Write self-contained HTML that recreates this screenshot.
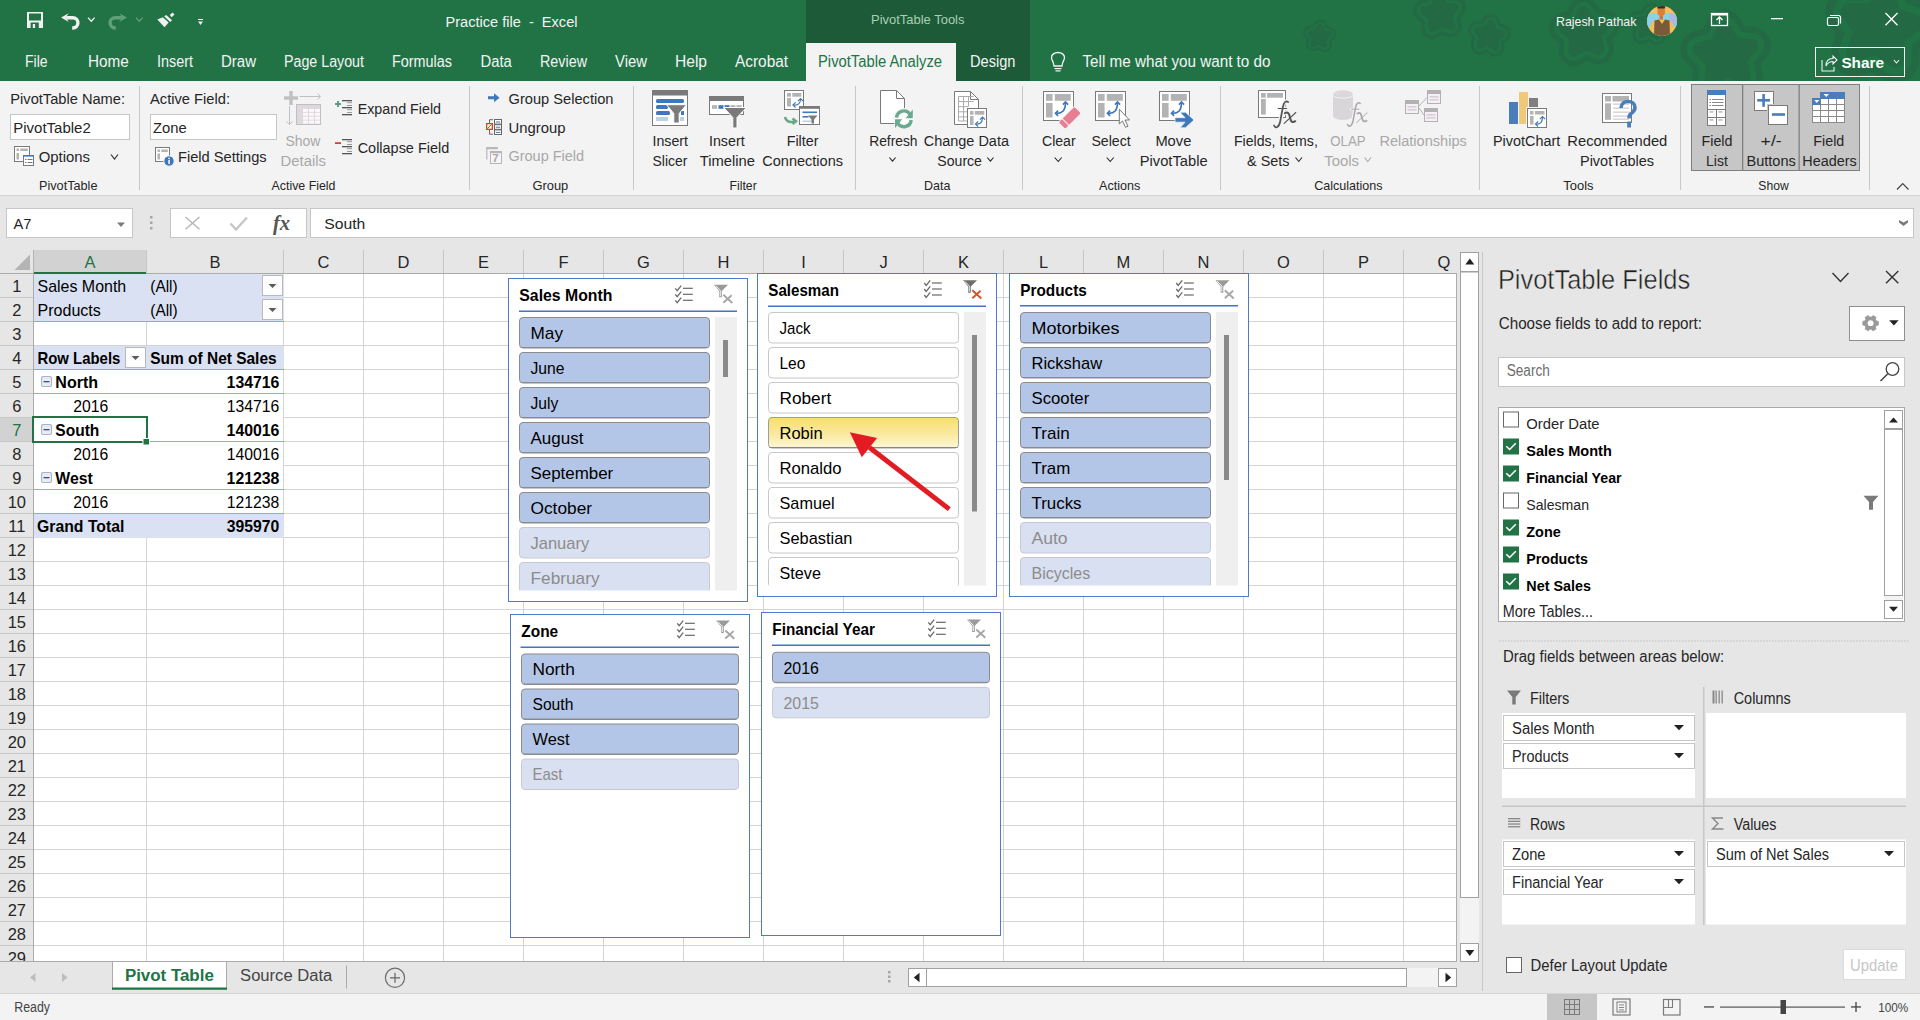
<!DOCTYPE html>
<html><head><meta charset="utf-8"><title>Practice file - Excel</title>
<style>
html,body{margin:0;padding:0;width:1920px;height:1020px;overflow:hidden;background:#e6e6e6;}
svg text{white-space:pre;}
svg{position:absolute;left:0;top:0;display:block;font-family:"Liberation Sans",sans-serif;}
</style></head><body>
<svg width="1920" height="1020" viewBox="0 0 1920 1020" shape-rendering="auto">
<rect x="0" y="0" width="1920" height="81" fill="#217346"/>
<rect x="806" y="0" width="224" height="81" fill="#1d5a37"/>
<rect x="806" y="43" width="150" height="38" fill="#f3f3f3"/>
<rect x="0" y="81" width="1920" height="114" fill="#f3f3f3"/>
<rect x="0" y="195" width="1920" height="1" fill="#d5d5d5"/>
<rect x="0" y="196" width="1920" height="797" fill="#e6e6e6"/>
<rect x="0" y="993" width="1920" height="1" fill="#d5d5d5"/>
<rect x="0" y="994" width="1920" height="26" fill="#f3f3f3"/>
<defs><clipPath id="tclip"><rect x="1030" y="0" width="890" height="81"/></clipPath></defs>
<g clip-path="url(#tclip)">
<path d="M1320.1,26.3 L1322.8,32.4 L1329.3,34.0 L1324.3,38.5 L1324.8,45.2 L1319.0,41.8 L1312.8,44.3 L1314.3,37.8 L1309.9,32.7 L1316.6,32.0Z" fill="#236944" stroke="#236944" stroke-width="14.0" stroke-linejoin="round"/>
<path d="M1320.1,26.3 L1322.8,32.4 L1329.3,34.0 L1324.3,38.5 L1324.8,45.2 L1319.0,41.8 L1312.8,44.3 L1314.3,37.8 L1309.9,32.7 L1316.6,32.0Z" fill="#217346" stroke="#217346" stroke-width="9.4" stroke-linejoin="round"/>
<path d="M1320.1,26.3 L1322.8,32.4 L1329.3,34.0 L1324.3,38.5 L1324.8,45.2 L1319.0,41.8 L1312.8,44.3 L1314.3,37.8 L1309.9,32.7 L1316.6,32.0Z" fill="#236944" stroke="#236944" stroke-width="5.0" stroke-linejoin="round"/>
<path d="M1438.3,-2.1 L1444.2,6.7 L1454.8,7.4 L1448.2,15.8 L1450.8,26.0 L1440.9,22.4 L1431.9,28.0 L1432.3,17.4 L1424.2,10.6 L1434.4,7.7Z" fill="#236944" stroke="#236944" stroke-width="22.235294117647058" stroke-linejoin="round"/>
<path d="M1438.3,-2.1 L1444.2,6.7 L1454.8,7.4 L1448.2,15.8 L1450.8,26.0 L1440.9,22.4 L1431.9,28.0 L1432.3,17.4 L1424.2,10.6 L1434.4,7.7Z" fill="#217346" stroke="#217346" stroke-width="14.929411764705883" stroke-linejoin="round"/>
<path d="M1438.3,-2.1 L1444.2,6.7 L1454.8,7.4 L1448.2,15.8 L1450.8,26.0 L1440.9,22.4 L1431.9,28.0 L1432.3,17.4 L1424.2,10.6 L1434.4,7.7Z" fill="#236944" stroke="#236944" stroke-width="7.941176470588235" stroke-linejoin="round"/>
<path d="M1490.8,22.9 L1493.8,31.1 L1502.0,33.7 L1495.2,39.0 L1495.2,47.7 L1488.0,42.8 L1479.8,45.5 L1482.2,37.2 L1477.1,30.2 L1485.8,29.9Z" fill="#236944" stroke="#236944" stroke-width="18.11764705882353" stroke-linejoin="round"/>
<path d="M1490.8,22.9 L1493.8,31.1 L1502.0,33.7 L1495.2,39.0 L1495.2,47.7 L1488.0,42.8 L1479.8,45.5 L1482.2,37.2 L1477.1,30.2 L1485.8,29.9Z" fill="#217346" stroke="#217346" stroke-width="12.164705882352942" stroke-linejoin="round"/>
<path d="M1490.8,22.9 L1493.8,31.1 L1502.0,33.7 L1495.2,39.0 L1495.2,47.7 L1488.0,42.8 L1479.8,45.5 L1482.2,37.2 L1477.1,30.2 L1485.8,29.9Z" fill="#236944" stroke="#236944" stroke-width="6.470588235294118" stroke-linejoin="round"/>
<path d="M1583.5,11.5 L1591.0,23.5 L1605.0,24.9 L1595.9,35.7 L1598.9,49.5 L1585.8,44.2 L1573.6,51.3 L1574.6,37.2 L1564.0,27.8 L1577.8,24.4Z" fill="#236944" stroke="#236944" stroke-width="29.647058823529413" stroke-linejoin="round"/>
<path d="M1583.5,11.5 L1591.0,23.5 L1605.0,24.9 L1595.9,35.7 L1598.9,49.5 L1585.8,44.2 L1573.6,51.3 L1574.6,37.2 L1564.0,27.8 L1577.8,24.4Z" fill="#217346" stroke="#217346" stroke-width="19.905882352941177" stroke-linejoin="round"/>
<path d="M1583.5,11.5 L1591.0,23.5 L1605.0,24.9 L1595.9,35.7 L1598.9,49.5 L1585.8,44.2 L1573.6,51.3 L1574.6,37.2 L1564.0,27.8 L1577.8,24.4Z" fill="#236944" stroke="#236944" stroke-width="10.588235294117647" stroke-linejoin="round"/>
<path d="M1650.9,11.8 L1654.4,19.7 L1662.8,21.8 L1656.4,27.6 L1657.0,36.2 L1649.5,31.8 L1641.5,35.1 L1643.3,26.7 L1637.8,20.1 L1646.4,19.2Z" fill="#236944" stroke="#236944" stroke-width="18.11764705882353" stroke-linejoin="round"/>
<path d="M1650.9,11.8 L1654.4,19.7 L1662.8,21.8 L1656.4,27.6 L1657.0,36.2 L1649.5,31.8 L1641.5,35.1 L1643.3,26.7 L1637.8,20.1 L1646.4,19.2Z" fill="#217346" stroke="#217346" stroke-width="12.164705882352942" stroke-linejoin="round"/>
<path d="M1650.9,11.8 L1654.4,19.7 L1662.8,21.8 L1656.4,27.6 L1657.0,36.2 L1649.5,31.8 L1641.5,35.1 L1643.3,26.7 L1637.8,20.1 L1646.4,19.2Z" fill="#236944" stroke="#236944" stroke-width="6.470588235294118" stroke-linejoin="round"/>
<path d="M1724.1,28.5 L1733.6,43.8 L1751.6,45.7 L1739.9,59.5 L1743.7,77.1 L1727.0,70.3 L1711.4,79.4 L1712.7,61.4 L1699.2,49.3 L1716.8,45.0Z" fill="#236944" stroke="#236944" stroke-width="37.88235294117648" stroke-linejoin="round"/>
<path d="M1724.1,28.5 L1733.6,43.8 L1751.6,45.7 L1739.9,59.5 L1743.7,77.1 L1727.0,70.3 L1711.4,79.4 L1712.7,61.4 L1699.2,49.3 L1716.8,45.0Z" fill="#217346" stroke="#217346" stroke-width="25.43529411764706" stroke-linejoin="round"/>
<path d="M1724.1,28.5 L1733.6,43.8 L1751.6,45.7 L1739.9,59.5 L1743.7,77.1 L1727.0,70.3 L1711.4,79.4 L1712.7,61.4 L1699.2,49.3 L1716.8,45.0Z" fill="#236944" stroke="#236944" stroke-width="13.529411764705884" stroke-linejoin="round"/>
<path d="M1886.0,-6.3 L1893.0,15.4 L1914.5,23.2 L1896.0,36.5 L1895.3,59.3 L1876.9,45.8 L1855.0,52.2 L1862.1,30.5 L1849.3,11.7 L1872.1,11.7Z" fill="#236944" stroke="#236944" stroke-width="47.76470588235294" stroke-linejoin="round"/>
<path d="M1886.0,-6.3 L1893.0,15.4 L1914.5,23.2 L1896.0,36.5 L1895.3,59.3 L1876.9,45.8 L1855.0,52.2 L1862.1,30.5 L1849.3,11.7 L1872.1,11.7Z" fill="#217346" stroke="#217346" stroke-width="32.07058823529412" stroke-linejoin="round"/>
<path d="M1886.0,-6.3 L1893.0,15.4 L1914.5,23.2 L1896.0,36.5 L1895.3,59.3 L1876.9,45.8 L1855.0,52.2 L1862.1,30.5 L1849.3,11.7 L1872.1,11.7Z" fill="#236944" stroke="#236944" stroke-width="17.058823529411764" stroke-linejoin="round"/>
</g>
<rect x="27" y="12" width="16" height="16" fill="#f1f1f1"/>
<rect x="29" y="13.5" width="12" height="7" fill="#217346"/>
<rect x="30.6" y="22.5" width="8.2" height="5.5" fill="#217346"/>
<rect x="32.8" y="24" width="2.3" height="4" fill="#f1f1f1"/>
<g>
<path d="M61.1,17.4 L68.7,13.2 L66.8,15.9 V19 L68.7,21.9 Z" fill="#f1f1f1"/>
<path d="M66.5,17.7 H72.8 A5.15,5.15 0 0 1 72.8,28 H72.2" fill="none" stroke="#f1f1f1" stroke-width="3.4"/>
</g>
<path d="M88,17.6 L91.3,21.2 L94.6,17.6" fill="none" stroke="#f1f1f1" stroke-width="1.3"/>
<g transform="translate(188,0) scale(-1,1)">
<path d="M61.1,17.4 L68.7,13.2 L66.8,15.9 V19 L68.7,21.9 Z" fill="#5fa07a"/>
<path d="M66.5,17.7 H72.8 A5.15,5.15 0 0 1 72.8,28 H72.2" fill="none" stroke="#5fa07a" stroke-width="3.4"/>
</g>
<path d="M136,17.6 L139.3,21.2 L142.6,17.6" fill="none" stroke="#5fa07a" stroke-width="1.3"/>
<path d="M157.3,19.5 L162.8,17.3 L168.7,22.6 L164.5,27.2 Z" fill="#f1f1f1"/>
<path d="M164.2,16.2 L166.2,14.9 L172,20.2 L170.2,21.9 Z" fill="#f1f1f1"/>
<path d="M169.8,15.1 L172.5,12.5 L174.5,14.4 L171.6,17.2 Z" fill="#f1f1f1"/>
<rect x="198" y="19" width="5" height="1" fill="#f1f1f1"/>
<path d="M198,21.5 H203 L200.5,25 Z" fill="#f1f1f1"/>
<text x="445.50" y="26.70" font-size="15.5" fill="#f4f4f4" textLength="131.97" lengthAdjust="spacingAndGlyphs">Practice file  -  Excel</text>
<text x="871.00" y="24.00" font-size="13.5" fill="#a9d0b6" textLength="93.48" lengthAdjust="spacingAndGlyphs">PivotTable Tools</text>
<text x="1556.00" y="25.70" font-size="13.5" fill="#f4f4f4" textLength="80.33" lengthAdjust="spacingAndGlyphs">Rajesh Pathak</text>
<defs><clipPath id="av"><circle cx="1662" cy="21" r="15"/></clipPath></defs>
<g clip-path="url(#av)">
<rect x="1647" y="6" width="30" height="30" fill="#f3c062"/>
<rect x="1647" y="13" width="30" height="14" fill="#86d3ea"/>
<rect x="1669" y="13" width="8" height="12" fill="#a9b9e0"/>
<path d="M1650,36 L1651,24 C1652,21 1656,20 1662,20 C1668,20 1672,21 1673,24 L1674,36 Z" fill="#f0bf55"/>
<path d="M1654,36 L1654.5,20.5 L1659,19.5 L1662,24 L1665,19.5 L1669.5,20.5 L1670,36 Z" fill="#7b5a3c"/>
<ellipse cx="1661.2" cy="11.5" rx="3.8" ry="5" fill="#d2813f"/>
<rect x="1657.3" y="5.5" width="7.8" height="3" fill="#3a2a20"/>
<rect x="1659.5" y="16" width="3.5" height="3.5" fill="#c87838"/>
</g>
<rect x="1711.5" y="13.5" width="16" height="12" fill="none" stroke="#ffffff" stroke-width="1.3"/>
<rect x="1711.5" y="13.5" width="16" height="2" fill="#ffffff"/>
<path d="M1719.5,24 V17.5 M1716.5,20 L1719.5,17 L1722.5,20" fill="none" stroke="#ffffff" stroke-width="1.3"/>
<rect x="1771" y="18" width="12" height="1.3" fill="#ffffff"/>
<path d="M1830,15.5 H1838.5 C1839.6,15.5 1840.5,16.4 1840.5,17.5 V23.5" fill="none" stroke="#ffffff" stroke-width="1.2"/>
<rect x="1827.5" y="17.5" width="11" height="8" fill="none" stroke="#ffffff" stroke-width="1.2" rx="1.5"/>
<path d="M1885.5,13 L1897.5,25.3 M1897.5,13 L1885.5,25.3" fill="none" stroke="#ffffff" stroke-width="1.3"/>
<text x="25.00" y="66.80" font-size="16" fill="#f4f4f4" textLength="22.52" lengthAdjust="spacingAndGlyphs">File</text>
<text x="88.00" y="66.80" font-size="16" fill="#f4f4f4" textLength="40.71" lengthAdjust="spacingAndGlyphs">Home</text>
<text x="157.00" y="66.80" font-size="16" fill="#f4f4f4" textLength="36.01" lengthAdjust="spacingAndGlyphs">Insert</text>
<text x="221.00" y="66.80" font-size="16" fill="#f4f4f4" textLength="34.98" lengthAdjust="spacingAndGlyphs">Draw</text>
<text x="284.00" y="66.80" font-size="16" fill="#f4f4f4" textLength="80.01" lengthAdjust="spacingAndGlyphs">Page Layout</text>
<text x="392.00" y="66.80" font-size="16" fill="#f4f4f4" textLength="59.97" lengthAdjust="spacingAndGlyphs">Formulas</text>
<text x="480.50" y="66.80" font-size="16" fill="#f4f4f4" textLength="31.21" lengthAdjust="spacingAndGlyphs">Data</text>
<text x="540.00" y="66.80" font-size="16" fill="#f4f4f4" textLength="46.98" lengthAdjust="spacingAndGlyphs">Review</text>
<text x="615.00" y="66.80" font-size="16" fill="#f4f4f4" textLength="31.99" lengthAdjust="spacingAndGlyphs">View</text>
<text x="675.00" y="66.80" font-size="16" fill="#f4f4f4" textLength="32.03" lengthAdjust="spacingAndGlyphs">Help</text>
<text x="735.00" y="66.80" font-size="16" fill="#f4f4f4" textLength="53.02" lengthAdjust="spacingAndGlyphs">Acrobat</text>
<text x="818.00" y="66.80" font-size="16" fill="#217346" textLength="123.99" lengthAdjust="spacingAndGlyphs">PivotTable Analyze</text>
<text x="970.00" y="66.80" font-size="16" fill="#f4f4f4" textLength="45.47" lengthAdjust="spacingAndGlyphs">Design</text>
<path d="M1054,66 C1054,62 1051.5,60.5 1051.5,57.5 C1051.5,54.5 1054.5,52.5 1058,52.5 C1061.5,52.5 1064.5,54.5 1064.5,57.5 C1064.5,60.5 1062,62 1062,66 Z" fill="none" stroke="#f4f4f4" stroke-width="1.3"/>
<rect x="1054.5" y="68" width="7" height="1.2" fill="#f4f4f4"/>
<rect x="1055.5" y="70.3" width="5" height="1.2" fill="#f4f4f4"/>
<text x="1082.50" y="66.80" font-size="16" fill="#f4f4f4" textLength="188.00" lengthAdjust="spacingAndGlyphs">Tell me what you want to do</text>
<rect x="1815.5" y="47.5" width="89" height="29" fill="none" stroke="#f4f4f4" stroke-width="1"/>
<path d="M1822,60 V71 H1834 V67 M1826,66 C1826,61 1829,58.5 1833,58.5 V56 L1837,60 L1833,64 V61.5 C1830,61.5 1827.5,63 1826,66 Z" fill="none" stroke="#f4f4f4" stroke-width="1.1"/>
<text x="1841.40" y="68.30" font-size="15.5" fill="#ffffff" font-weight="700" textLength="42.59" lengthAdjust="spacingAndGlyphs">Share</text>
<path d="M1894,60 L1896.5,63 L1899,60" fill="none" stroke="#f4f4f4" stroke-width="1.1"/>
<rect x="139" y="86" width="1" height="104" fill="#c8c8c8"/>
<rect x="469" y="86" width="1" height="104" fill="#c8c8c8"/>
<rect x="633" y="86" width="1" height="104" fill="#c8c8c8"/>
<rect x="855" y="86" width="1" height="104" fill="#c8c8c8"/>
<rect x="1022" y="86" width="1" height="104" fill="#c8c8c8"/>
<rect x="1220" y="86" width="1" height="104" fill="#c8c8c8"/>
<rect x="1479" y="86" width="1" height="104" fill="#c8c8c8"/>
<rect x="1680" y="86" width="1" height="104" fill="#c8c8c8"/>
<rect x="1869" y="86" width="1" height="104" fill="#c8c8c8"/>
<text x="10.30" y="103.70" font-size="15.5" fill="#262626" textLength="114.73" lengthAdjust="spacingAndGlyphs">PivotTable Name:</text>
<rect x="10" y="114" width="120" height="26" fill="#c6c6c6"/>
<rect x="11" y="115" width="118" height="24" fill="#ffffff"/>
<text x="13.30" y="132.80" font-size="15.5" fill="#262626" textLength="77.50" lengthAdjust="spacingAndGlyphs">PivotTable2</text>
<rect x="14" y="146" width="16" height="16" fill="#7a7a7a"/>
<rect x="15" y="147" width="14" height="14" fill="#ffffff"/>
<rect x="16.5" y="148.5" width="2.5" height="2.5" fill="#b3b3b3"/>
<rect x="20.3" y="148.5" width="7.5" height="2.5" fill="#b3b3b3"/>
<rect x="16.5" y="153" width="2.5" height="6.5" fill="#b3b3b3"/>
<rect x="23" y="155" width="11" height="11" fill="#7a7a7a"/>
<rect x="24" y="156" width="9" height="9" fill="#ffffff"/>
<rect x="23" y="155" width="11" height="1.6" fill="#3f77bc"/>
<rect x="25" y="159" width="1.5" height="1" fill="#777"/>
<rect x="27.5" y="159" width="5" height="1" fill="#777"/>
<rect x="25" y="162" width="1.5" height="1" fill="#777"/>
<rect x="27.5" y="162" width="5" height="1" fill="#777"/>
<text x="38.70" y="162.00" font-size="15.5" fill="#262626" textLength="51.32" lengthAdjust="spacingAndGlyphs">Options</text>
<path d="M111,154.5 L114.5,159.0 L118,154.5" fill="none" stroke="#262626" stroke-width="1.1"/>
<text x="39.00" y="190.00" font-size="13" fill="#262626" textLength="58.49" lengthAdjust="spacingAndGlyphs">PivotTable</text>
<text x="150.00" y="103.70" font-size="15.5" fill="#262626" textLength="80.02" lengthAdjust="spacingAndGlyphs">Active Field:</text>
<rect x="150" y="114" width="127" height="26" fill="#c6c6c6"/>
<rect x="151" y="115" width="125" height="24" fill="#ffffff"/>
<text x="153.00" y="132.80" font-size="15.5" fill="#262626" textLength="33.69" lengthAdjust="spacingAndGlyphs">Zone</text>
<rect x="155" y="147" width="15" height="15" fill="#7a7a7a"/>
<rect x="156" y="148" width="13" height="13" fill="#ffffff"/>
<rect x="157.5" y="149.5" width="2.5" height="2.5" fill="#b3b3b3"/>
<rect x="161.3" y="149.5" width="6.5" height="2.5" fill="#b3b3b3"/>
<rect x="157.5" y="153.5" width="2.5" height="6" fill="#b3b3b3"/>
<circle cx="169" cy="161" r="5.2" fill="#3f77bc" stroke="#f3f3f3" stroke-width="1"/>
<rect x="168.3" y="159.8" width="1.5" height="4.2" fill="#fff"/>
<rect x="168.3" y="157.7" width="1.5" height="1.3" fill="#fff"/>
<text x="178.00" y="162.00" font-size="15.5" fill="#262626" textLength="88.68" lengthAdjust="spacingAndGlyphs">Field Settings</text>
<rect x="284" y="96.3" width="14" height="3.4" fill="#c2bfc2"/>
<rect x="289.3" y="91" width="3.4" height="14" fill="#c2bfc2"/>
<rect x="299.5" y="96" width="21" height="1" fill="#c2bfc2"/>
<path d="M317.5,93.5 L320.5,96.5 L317.5,99.5" fill="none" stroke="#c2bfc2" stroke-width="1"/>
<rect x="289" y="106" width="1" height="18" fill="#c2bfc2"/>
<path d="M286.5,121.5 L289.5,124.5 L292.5,121.5" fill="none" stroke="#c2bfc2" stroke-width="1"/>
<rect x="296" y="104" width="25" height="21" fill="#c2bfc2"/>
<rect x="297" y="105" width="23" height="19" fill="#ddd9dd"/>
<rect x="303" y="108.9" width="5" height="3" fill="#fbf7fb"/>
<rect x="303" y="112.8" width="5" height="3" fill="#fbf7fb"/>
<rect x="303" y="116.7" width="5" height="3" fill="#fbf7fb"/>
<rect x="303" y="120.6" width="5" height="3" fill="#fbf7fb"/>
<rect x="309" y="108.9" width="5" height="3" fill="#fbf7fb"/>
<rect x="309" y="112.8" width="5" height="3" fill="#fbf7fb"/>
<rect x="309" y="116.7" width="5" height="3" fill="#fbf7fb"/>
<rect x="309" y="120.6" width="5" height="3" fill="#fbf7fb"/>
<rect x="315" y="108.9" width="5" height="3" fill="#fbf7fb"/>
<rect x="315" y="112.8" width="5" height="3" fill="#fbf7fb"/>
<rect x="315" y="116.7" width="5" height="3" fill="#fbf7fb"/>
<rect x="315" y="120.6" width="5" height="3" fill="#fbf7fb"/>
<text x="285.40" y="145.60" font-size="15.5" fill="#a8a8a8" textLength="35.05" lengthAdjust="spacingAndGlyphs">Show</text>
<text x="280.60" y="165.80" font-size="15.5" fill="#a8a8a8" textLength="45.33" lengthAdjust="spacingAndGlyphs">Details</text>
<rect x="342" y="100" width="10" height="1.3" fill="#555"/>
<rect x="347" y="102.2" width="5" height="1" fill="#999"/>
<rect x="347" y="105" width="5" height="1" fill="#999"/>
<rect x="342" y="107" width="10" height="1.3" fill="#555"/>
<rect x="347" y="109.2" width="5" height="1" fill="#999"/>
<rect x="347" y="112" width="5" height="1" fill="#999"/>
<rect x="342" y="114" width="10" height="1.3" fill="#555"/>
<rect x="335" y="103.1" width="6" height="1.8" fill="#4e9a76"/>
<rect x="337.1" y="101" width="1.8" height="6" fill="#4e9a76"/>
<text x="357.70" y="113.80" font-size="15.5" fill="#262626" textLength="83.33" lengthAdjust="spacingAndGlyphs">Expand Field</text>
<rect x="342" y="139" width="10" height="1.3" fill="#555"/>
<rect x="347" y="141.2" width="5" height="1" fill="#999"/>
<rect x="347" y="144" width="5" height="1" fill="#999"/>
<rect x="342" y="146" width="10" height="1.3" fill="#555"/>
<rect x="347" y="148.2" width="5" height="1" fill="#999"/>
<rect x="347" y="151" width="5" height="1" fill="#999"/>
<rect x="342" y="153" width="10" height="1.3" fill="#555"/>
<rect x="335" y="142.2" width="6" height="1.8" fill="#d24726"/>
<text x="357.70" y="152.90" font-size="15.5" fill="#262626" textLength="91.52" lengthAdjust="spacingAndGlyphs">Collapse Field</text>
<text x="271.50" y="190.00" font-size="13" fill="#262626" textLength="63.98" lengthAdjust="spacingAndGlyphs">Active Field</text>
<path d="M488,96.3 H494 V93.2 L499.6,97.7 L494,102.2 V99.2 H488 Z" fill="#3f77bc"/>
<text x="508.50" y="104.20" font-size="15.5" fill="#262626" textLength="105.02" lengthAdjust="spacingAndGlyphs">Group Selection</text>
<path d="M493,119.7 H489.5 V134.2 H493" fill="none" stroke="#666" stroke-width="1"/>
<rect x="486" y="123" width="7" height="7" fill="#d24726"/>
<rect x="487.3" y="124.3" width="4.4" height="4.4" fill="#fff"/>
<path d="M487.5,128.5 L491.5,124.5" fill="none" stroke="#d24726" stroke-width="1"/>
<rect x="494" y="119.0" width="8" height="5.6" fill="#666"/>
<rect x="495" y="120.0" width="6" height="3.5999999999999996" fill="#ffffff"/>
<rect x="495.8" y="121.5" width="4.4" height="1" fill="#3f77bc"/>
<rect x="494" y="124.2" width="8" height="5.6" fill="#666"/>
<rect x="495" y="125.2" width="6" height="3.5999999999999996" fill="#ffffff"/>
<rect x="495.8" y="126.7" width="4.4" height="1" fill="#3f77bc"/>
<rect x="494" y="129.4" width="8" height="5.6" fill="#666"/>
<rect x="495" y="130.4" width="6" height="3.5999999999999996" fill="#ffffff"/>
<rect x="495.8" y="131.9" width="4.4" height="1" fill="#3f77bc"/>
<text x="508.50" y="132.50" font-size="15.5" fill="#262626" textLength="56.92" lengthAdjust="spacingAndGlyphs">Ungroup</text>
<path d="M486.8,159.5 V147.8 H497.7" fill="none" stroke="#b8b5b8" stroke-width="1.2"/>
<rect x="486.3" y="147.2" width="11.4" height="2" fill="#b8b5b8"/>
<rect x="490" y="151" width="12" height="13" fill="#b8b5b8"/>
<rect x="491" y="152" width="10" height="11" fill="#f7f3f7"/>
<rect x="490" y="151" width="12" height="2.2" fill="#b8b5b8"/>
<text x="492.2" y="162" font-size="11.5" fill="#a9a9a9" font-weight="700">7</text>
<text x="508.50" y="161.40" font-size="15.5" fill="#a8a8a8" textLength="75.50" lengthAdjust="spacingAndGlyphs">Group Field</text>
<text x="532.40" y="190.00" font-size="13" fill="#262626" textLength="35.89" lengthAdjust="spacingAndGlyphs">Group</text>
<rect x="652" y="90" width="36" height="36" fill="#7a7a7a"/>
<rect x="653" y="91" width="34" height="34" fill="#ffffff"/>
<rect x="652" y="90" width="36" height="5.5" fill="#7a7a7a"/>
<rect x="656" y="99" width="28" height="4" fill="#3f77bc" rx="1.5"/>
<rect x="656" y="105" width="12" height="4" fill="#3f77bc" rx="1.5"/>
<rect x="656" y="111" width="14" height="4" fill="#3f77bc" rx="1.5"/>
<rect x="681" y="111" width="3" height="4" fill="#3f77bc"/>
<rect x="656" y="117" width="12" height="4" fill="#bcd0ea"/>
<rect x="680" y="117" width="4" height="4" fill="#bcd0ea"/>
<path d="M666.5,104.7 H686.5 L679.2,113.5 V123 H673.8 V113.5 Z" fill="#7a7a7a" stroke="#ffffff" stroke-width="1"/>
<text x="652.50" y="145.50" font-size="15.5" fill="#262626" textLength="35.51" lengthAdjust="spacingAndGlyphs">Insert</text>
<text x="652.50" y="165.50" font-size="15.5" fill="#262626" textLength="34.81" lengthAdjust="spacingAndGlyphs">Slicer</text>
<rect x="709" y="96" width="35" height="19" fill="#7a7a7a"/>
<rect x="710" y="97" width="33" height="17" fill="#ffffff"/>
<rect x="709" y="96" width="35" height="5" fill="#7a7a7a"/>
<rect x="712" y="105.2" width="5" height="3.6" fill="#b3b3b3"/>
<rect x="718.5" y="105.2" width="5" height="3.6" fill="#3f77bc"/>
<rect x="724.5" y="105.2" width="5" height="1.8" fill="#3f77bc"/>
<rect x="730.5" y="105.2" width="5" height="1.8" fill="#b3b3b3"/>
<rect x="736.5" y="105.2" width="5" height="1.8" fill="#b3b3b3"/>
<path d="M723.7,107.5 H746.5 L737,117.5 V128 H732.8 V117.5 Z" fill="#7a7a7a" stroke="#ffffff" stroke-width="1"/>
<text x="709.00" y="145.50" font-size="15.5" fill="#262626" textLength="35.61" lengthAdjust="spacingAndGlyphs">Insert</text>
<text x="699.80" y="165.50" font-size="15.5" fill="#262626" textLength="55.23" lengthAdjust="spacingAndGlyphs">Timeline</text>
<rect x="784" y="90" width="20" height="20" fill="#7a7a7a"/>
<rect x="785" y="91" width="18" height="18" fill="#ffffff"/>
<rect x="787" y="93" width="4" height="3.7" fill="#b3b3b3"/>
<rect x="792.3" y="93" width="9" height="3.7" fill="#b3b3b3"/>
<rect x="787" y="98" width="4" height="8.5" fill="#b3b3b3"/>
<path d="M793.5,105 Q800.5,105.8 800.5,99.0" fill="none" stroke="#3f77bc" stroke-width="1.2"/>
<path d="M795.6,102.4 L793,105 L795.6,107.6" fill="none" stroke="#3f77bc" stroke-width="1.2"/>
<path d="M797.9,101.1 L800.5,98.5 L803.1,101.1" fill="none" stroke="#3f77bc" stroke-width="1.2"/>
<rect x="799" y="106" width="21" height="19" fill="#7a7a7a"/>
<rect x="800" y="107" width="19" height="17" fill="#ffffff"/>
<rect x="799" y="106" width="21" height="2.8" fill="#7a7a7a"/>
<rect x="802.5" y="111.5" width="14.5" height="1.6" fill="#3f77bc"/>
<rect x="802.5" y="116" width="6" height="1.6" fill="#3f77bc"/>
<rect x="802.5" y="120.5" width="9" height="1.6" fill="#bcd0ea"/>
<path d="M808,115.5 H817.5 L814,119.5 V123.5 H811.5 V119.5 Z" fill="#7a7a7a"/>
<path d="M785,117 C786,121.5 790,123 795,121.5 M792.5,118.5 L796,121.3 L792.5,124" fill="none" stroke="#6aa88a" stroke-width="2.6"/>
<text x="786.70" y="145.50" font-size="15.5" fill="#262626" textLength="31.83" lengthAdjust="spacingAndGlyphs">Filter</text>
<text x="762.30" y="165.50" font-size="15.5" fill="#262626" textLength="80.69" lengthAdjust="spacingAndGlyphs">Connections</text>
<text x="729.60" y="190.00" font-size="13" fill="#262626" textLength="27.13" lengthAdjust="spacingAndGlyphs">Filter</text>
<path d="M880.5,90.5 H896.5 L904.5,98.5 V123.5 H880.5 Z" fill="#ffffff" stroke="#7a7a7a" stroke-width="1" stroke-linejoin="miter"/>
<path d="M896.5,90.5 V98.5 H904.5" fill="none" stroke="#7a7a7a" stroke-width="1"/>
<circle cx="903.9" cy="118.8" r="10.3" fill="#ffffff" stroke="#f3f3f3" stroke-width="1"/>
<path d="M896.6,117.6 A7.3,7.3 0 0 1 910.2,114.6" fill="none" stroke="#6aaa90" stroke-width="3.4"/>
<path d="M911.2,120 A7.3,7.3 0 0 1 897.6,123" fill="none" stroke="#6aaa90" stroke-width="3.4"/>
<path d="M912.8,109.5 V118.3 H905.6 Z" fill="#6aaa90"/>
<path d="M895,128 V119.3 H902.2 Z" fill="#6aaa90"/>
<text x="869.20" y="145.50" font-size="15.5" fill="#262626" textLength="48.32" lengthAdjust="spacingAndGlyphs">Refresh</text>
<path d="M889.4,157.5 L892.5,161.2 L895.6,157.5" fill="none" stroke="#262626" stroke-width="1.1"/>
<path d="M954.5,91.5 H970.5 L978.5,99.5 V124.5 H954.5 Z" fill="#ffffff" stroke="#7a7a7a" stroke-width="1" stroke-linejoin="miter"/>
<path d="M970.5,91.5 V99.5 H978.5" fill="none" stroke="#7a7a7a" stroke-width="1"/>
<rect x="958" y="96.0" width="1" height="1" fill="#fff"/>
<rect x="958" y="101.1" width="1" height="1" fill="#fff"/>
<rect x="958" y="106.2" width="1" height="1" fill="#fff"/>
<rect x="958" y="111.3" width="1" height="1" fill="#fff"/>
<path d="M958.5,96.5 H973.5 M958.5,101.6 H973.5 M958.5,106.7 H968 M958.5,111.8 H968 M958.5,116.9 H968 M958.5,121 H968 M958.5,96.5 V121 M963.5,96.5 V121 M968.5,96.5 V106.7" fill="none" stroke="#ababab" stroke-width="1"/>
<rect x="967" y="108" width="20" height="20" fill="#7a7a7a"/>
<rect x="968" y="109" width="18" height="18" fill="#ffffff"/>
<rect x="970" y="111" width="3.5" height="3.7" fill="#b3b3b3"/>
<rect x="974.8" y="111" width="9.5" height="3.7" fill="#b3b3b3"/>
<rect x="970" y="116" width="3.5" height="9" fill="#b3b3b3"/>
<path d="M976.0,124 Q982.5,124.8 982.5,117.5" fill="none" stroke="#3f77bc" stroke-width="1.2"/>
<path d="M978.1,121.4 L975.5,124 L978.1,126.6" fill="none" stroke="#3f77bc" stroke-width="1.2"/>
<path d="M979.9,119.6 L982.5,117 L985.1,119.6" fill="none" stroke="#3f77bc" stroke-width="1.2"/>
<text x="923.75" y="145.50" font-size="15.5" fill="#262626" textLength="85.22" lengthAdjust="spacingAndGlyphs">Change Data</text>
<text x="937.30" y="165.50" font-size="15.5" fill="#262626" textLength="44.68" lengthAdjust="spacingAndGlyphs">Source</text>
<path d="M987.3,157.5 L990.4,161.2 L993.5,157.5" fill="none" stroke="#262626" stroke-width="1.1"/>
<text x="924.00" y="190.00" font-size="13" fill="#262626" textLength="26.37" lengthAdjust="spacingAndGlyphs">Data</text>
<rect x="1043" y="91" width="31" height="30" fill="#7a7a7a"/>
<rect x="1044" y="92" width="29" height="28" fill="#ffffff"/>
<rect x="1046" y="94" width="6.6" height="6.8" fill="#b3b3b3"/>
<rect x="1054.8" y="94" width="16" height="6.8" fill="#b3b3b3"/>
<rect x="1046" y="103" width="6.6" height="14.5" fill="#b3b3b3"/>
<path d="M1056.0,113.3 Q1065.5,114.1 1065.5,102.5" fill="none" stroke="#3f77bc" stroke-width="1.7"/>
<path d="M1058.1,110.7 L1055.5,113.3 L1058.1,115.89999999999999" fill="none" stroke="#3f77bc" stroke-width="1.7"/>
<path d="M1062.9,104.6 L1065.5,102 L1068.1,104.6" fill="none" stroke="#3f77bc" stroke-width="1.7"/>
<g transform="translate(1069.8,117.8) rotate(-45)"><rect x="-11.5" y="-5" width="23" height="10" rx="2" fill="#e57f91" stroke="#f3f3f3" stroke-width="1"/><rect x="-6.5" y="-5.5" width="1" height="11" fill="#f3f3f3"/></g>
<text x="1042.00" y="145.50" font-size="15.5" fill="#262626" textLength="33.60" lengthAdjust="spacingAndGlyphs">Clear</text>
<path d="M1054.7,157.5 L1058.2,161.5 L1061.7,157.5" fill="none" stroke="#262626" stroke-width="1.1"/>
<rect x="1095" y="91" width="31" height="30" fill="#7a7a7a"/>
<rect x="1096" y="92" width="29" height="28" fill="#ffffff"/>
<rect x="1098" y="94" width="6.6" height="6.8" fill="#b3b3b3"/>
<rect x="1106.8" y="94" width="16" height="6.8" fill="#b3b3b3"/>
<rect x="1098" y="103" width="6.6" height="14.5" fill="#b3b3b3"/>
<path d="M1108.0,113.3 Q1117.5,114.1 1117.5,102.5" fill="none" stroke="#3f77bc" stroke-width="1.7"/>
<path d="M1110.1,110.7 L1107.5,113.3 L1110.1,115.89999999999999" fill="none" stroke="#3f77bc" stroke-width="1.7"/>
<path d="M1114.9,104.6 L1117.5,102 L1120.1,104.6" fill="none" stroke="#3f77bc" stroke-width="1.7"/>
<path d="M1119.3,109.3 V124 L1122.5,121 L1125.5,127.3 L1128,126.2 L1125,120 H1129.5 Z" fill="#ffffff" stroke="#777" stroke-width="1"/>
<text x="1091.40" y="145.50" font-size="15.5" fill="#262626" textLength="39.29" lengthAdjust="spacingAndGlyphs">Select</text>
<path d="M1106.7,157.5 L1110.2,161.5 L1113.7,157.5" fill="none" stroke="#262626" stroke-width="1.1"/>
<rect x="1159" y="91" width="31" height="30" fill="#7a7a7a"/>
<rect x="1160" y="92" width="29" height="28" fill="#ffffff"/>
<rect x="1162" y="94" width="6.6" height="6.8" fill="#b3b3b3"/>
<rect x="1170.8" y="94" width="16" height="6.8" fill="#b3b3b3"/>
<rect x="1162" y="103" width="6.6" height="14.5" fill="#b3b3b3"/>
<path d="M1172.0,113.3 Q1181.5,114.1 1181.5,102.5" fill="none" stroke="#3f77bc" stroke-width="1.7"/>
<path d="M1174.1,110.7 L1171.5,113.3 L1174.1,115.89999999999999" fill="none" stroke="#3f77bc" stroke-width="1.7"/>
<path d="M1178.9,104.6 L1181.5,102 L1184.1,104.6" fill="none" stroke="#3f77bc" stroke-width="1.7"/>
<path d="M1175,117.7 H1185 L1180,112.2 H1185.5 L1194,120 L1185.5,127.8 H1180 L1185,122.2 H1175 Z" fill="#3f77bc" stroke="#f3f3f3" stroke-width="0.8"/>
<text x="1155.40" y="145.50" font-size="15.5" fill="#262626" textLength="35.91" lengthAdjust="spacingAndGlyphs">Move</text>
<text x="1139.80" y="165.50" font-size="15.5" fill="#262626" textLength="67.78" lengthAdjust="spacingAndGlyphs">PivotTable</text>
<text x="1099.00" y="190.00" font-size="13" fill="#262626" textLength="41.29" lengthAdjust="spacingAndGlyphs">Actions</text>
<rect x="1258" y="90" width="28" height="28" fill="#7a7a7a"/>
<rect x="1259" y="91" width="26" height="26" fill="#ffffff"/>
<rect x="1261" y="93" width="4.8" height="4.7" fill="#b3b3b3"/>
<rect x="1267" y="93" width="16" height="4.7" fill="#b3b3b3"/>
<rect x="1261" y="99" width="4.8" height="15.6" fill="#b3b3b3"/>
<path d="M1274,125.5 C1275.5,128.8 1279,127.6 1280.2,121.5 L1283,106.5 C1284,101.8 1286.2,100.2 1288.2,102.2" fill="none" stroke="#f3f3f3" stroke-width="4.1" stroke-linecap="round"/>
<path d="M1285,113.2 C1288,111.5 1289.2,113.5 1290,117.5 C1290.8,121.5 1292.2,123.3 1295.3,121.2" fill="none" stroke="#f3f3f3" stroke-width="4.4" stroke-linecap="round"/>
<path d="M1295.8,112.5 L1284.2,123.3" fill="none" stroke="#f3f3f3" stroke-width="3.5" stroke-linecap="round"/>
<path d="M1278.3,108.5 H1286.7" fill="none" stroke="#f3f3f3" stroke-width="3.5" stroke-linecap="round"/>
<path d="M1274,125.5 C1275.5,128.8 1279,127.6 1280.2,121.5 L1283,106.5 C1284,101.8 1286.2,100.2 1288.2,102.2" fill="none" stroke="#555" stroke-width="1.7" stroke-linecap="round"/>
<path d="M1285,113.2 C1288,111.5 1289.2,113.5 1290,117.5 C1290.8,121.5 1292.2,123.3 1295.3,121.2" fill="none" stroke="#555" stroke-width="2.0" stroke-linecap="round"/>
<path d="M1295.8,112.5 L1284.2,123.3" fill="none" stroke="#555" stroke-width="1.1" stroke-linecap="round"/>
<path d="M1278.3,108.5 H1286.7" fill="none" stroke="#555" stroke-width="1.1" stroke-linecap="round"/>
<text x="1234.00" y="145.50" font-size="15.5" fill="#262626" textLength="83.81" lengthAdjust="spacingAndGlyphs">Fields, Items,</text>
<text x="1247.00" y="165.50" font-size="15.5" fill="#262626" textLength="42.51" lengthAdjust="spacingAndGlyphs">&amp; Sets</text>
<path d="M1295.5,157.5 L1298.75,161.5 L1302.0,157.5" fill="none" stroke="#262626" stroke-width="1.1"/>
<ellipse cx="1343" cy="94.5" rx="10" ry="4.3" fill="#dcd8dc"/>
<rect x="1333" y="94.5" width="20" height="21.5" fill="#d9d6da"/>
<ellipse cx="1343" cy="116" rx="10" ry="4" fill="#d9d6da"/>
<path d="M1333,95.5 C1336,99 1350,99 1353,95.5" fill="none" stroke="#f3f3f3" stroke-width="1"/>
<g transform="translate(1346.9,102.1) scale(0.9) translate(-1273.4,-100.6)">
<path d="M1274,125.5 C1275.5,128.8 1279,127.6 1280.2,121.5 L1283,106.5 C1284,101.8 1286.2,100.2 1288.2,102.2" fill="none" stroke="#f3f3f3" stroke-width="4.1" stroke-linecap="round"/>
<path d="M1285,113.2 C1288,111.5 1289.2,113.5 1290,117.5 C1290.8,121.5 1292.2,123.3 1295.3,121.2" fill="none" stroke="#f3f3f3" stroke-width="4.4" stroke-linecap="round"/>
<path d="M1295.8,112.5 L1284.2,123.3" fill="none" stroke="#f3f3f3" stroke-width="3.5" stroke-linecap="round"/>
<path d="M1278.3,108.5 H1286.7" fill="none" stroke="#f3f3f3" stroke-width="3.5" stroke-linecap="round"/>
<path d="M1274,125.5 C1275.5,128.8 1279,127.6 1280.2,121.5 L1283,106.5 C1284,101.8 1286.2,100.2 1288.2,102.2" fill="none" stroke="#a8a8a8" stroke-width="1.7" stroke-linecap="round"/>
<path d="M1285,113.2 C1288,111.5 1289.2,113.5 1290,117.5 C1290.8,121.5 1292.2,123.3 1295.3,121.2" fill="none" stroke="#a8a8a8" stroke-width="2.0" stroke-linecap="round"/>
<path d="M1295.8,112.5 L1284.2,123.3" fill="none" stroke="#a8a8a8" stroke-width="1.1" stroke-linecap="round"/>
<path d="M1278.3,108.5 H1286.7" fill="none" stroke="#a8a8a8" stroke-width="1.1" stroke-linecap="round"/>
</g>
<text x="1330.30" y="145.50" font-size="15.5" fill="#a8a8a8" textLength="35.37" lengthAdjust="spacingAndGlyphs">OLAP</text>
<text x="1324.30" y="165.50" font-size="15.5" fill="#a8a8a8" textLength="34.69" lengthAdjust="spacingAndGlyphs">Tools</text>
<path d="M1364.5,157.5 L1367.75,161.5 L1371.0,157.5" fill="none" stroke="#a8a8a8" stroke-width="1.1"/>
<rect x="1405" y="100" width="14" height="14" fill="#b4b1b4"/>
<rect x="1406" y="104" width="12" height="9" fill="#f6f0f6"/>
<rect x="1407.5" y="106.5" width="9" height="0.8" fill="#b4b1b4"/>
<rect x="1407.5" y="109.5" width="9" height="0.8" fill="#b4b1b4"/>
<rect x="1427" y="90" width="14" height="14" fill="#b4b1b4"/>
<rect x="1428" y="94" width="12" height="9" fill="#f6f0f6"/>
<rect x="1429.5" y="96.5" width="9" height="0.8" fill="#b4b1b4"/>
<rect x="1429.5" y="99.5" width="9" height="0.8" fill="#b4b1b4"/>
<rect x="1424" y="108" width="14" height="14" fill="#b4b1b4"/>
<rect x="1425" y="112" width="12" height="9" fill="#f6f0f6"/>
<rect x="1426.5" y="114.5" width="9" height="0.8" fill="#b4b1b4"/>
<rect x="1426.5" y="117.5" width="9" height="0.8" fill="#b4b1b4"/>
<path d="M1419,106 L1427,97.5 M1419,108 L1424,115" fill="none" stroke="#b4b1b4" stroke-width="1"/>
<text x="1379.40" y="145.50" font-size="15.5" fill="#a8a8a8" textLength="87.38" lengthAdjust="spacingAndGlyphs">Relationships</text>
<text x="1314.20" y="190.00" font-size="13" fill="#262626" textLength="68.33" lengthAdjust="spacingAndGlyphs">Calculations</text>
<rect x="1509" y="102" width="9" height="22" fill="#4a7ebb"/>
<rect x="1519" y="92" width="9" height="32" fill="#f0c87a"/>
<rect x="1529" y="98" width="9" height="9" fill="#7f7f7f"/>
<rect x="1526" y="107" width="22" height="22" fill="#f3f3f3"/>
<rect x="1527" y="108" width="20" height="20" fill="#7a7a7a"/>
<rect x="1528" y="109" width="18" height="18" fill="#ffffff"/>
<rect x="1530" y="111" width="3.5" height="3.5" fill="#b3b3b3"/>
<rect x="1535" y="111" width="9.5" height="3.5" fill="#b3b3b3"/>
<rect x="1530" y="116" width="3.5" height="8.5" fill="#b3b3b3"/>
<path d="M1536.0,124 Q1542.5,124.8 1542.5,117.0" fill="none" stroke="#3f77bc" stroke-width="1.2"/>
<path d="M1538.1,121.4 L1535.5,124 L1538.1,126.6" fill="none" stroke="#3f77bc" stroke-width="1.2"/>
<path d="M1539.9,119.1 L1542.5,116.5 L1545.1,119.1" fill="none" stroke="#3f77bc" stroke-width="1.2"/>
<text x="1493.00" y="145.50" font-size="15.5" fill="#262626" textLength="67.18" lengthAdjust="spacingAndGlyphs">PivotChart</text>
<rect x="1602" y="93" width="30" height="30" fill="#7a7a7a"/>
<rect x="1603" y="94" width="28" height="28" fill="#ffffff"/>
<rect x="1605" y="96" width="6" height="5.5" fill="#b3b3b3"/>
<rect x="1612.5" y="96" width="16.5" height="5.5" fill="#b3b3b3"/>
<rect x="1605" y="103.3" width="6" height="16.5" fill="#b3b3b3"/>
<rect x="1613" y="103.5" width="16" height="1.3" fill="#cfcfcf"/>
<rect x="1613" y="107.5" width="16" height="1.3" fill="#cfcfcf"/>
<rect x="1613" y="111.5" width="16" height="1.3" fill="#cfcfcf"/>
<rect x="1613" y="115.5" width="16" height="1.3" fill="#cfcfcf"/>
<rect x="1613" y="118.5" width="16" height="1.3" fill="#cfcfcf"/>
<path d="M1621,108 C1621,103.5 1624.5,101.5 1628,101.5 C1632,101.5 1635,104 1635,107.5 C1635,111 1632.5,112.5 1630.5,114 C1629.3,115 1629,116 1629,118.5" fill="none" stroke="#4a7ebb" stroke-width="3.6" stroke-linejoin="round"/>
<rect x="1627.2" y="121.5" width="3.8" height="6" fill="#4a7ebb"/>
<text x="1567.30" y="145.50" font-size="15.5" fill="#262626" textLength="100.02" lengthAdjust="spacingAndGlyphs">Recommended</text>
<text x="1580.00" y="165.50" font-size="15.5" fill="#262626" textLength="73.98" lengthAdjust="spacingAndGlyphs">PivotTables</text>
<text x="1563.30" y="190.00" font-size="13" fill="#262626" textLength="30.19" lengthAdjust="spacingAndGlyphs">Tools</text>
<rect x="1691" y="84" width="169" height="87" fill="#7f7f7f"/>
<rect x="1692" y="85" width="167" height="85" fill="#c6c6c6"/>
<rect x="1742" y="85" width="1.3" height="85" fill="#7f7f7f"/>
<rect x="1798.5" y="85" width="1.3" height="85" fill="#7f7f7f"/>
<rect x="1707" y="90" width="19" height="36" fill="#7a7a7a"/>
<rect x="1708" y="91" width="17" height="34" fill="#ffffff"/>
<rect x="1707" y="90" width="19" height="5" fill="#4a7ebb"/>
<rect x="1709.5" y="99" width="1.5" height="1" fill="#888"/>
<rect x="1712" y="99" width="11.5" height="1" fill="#888"/>
<rect x="1709.5" y="102" width="1.5" height="1" fill="#888"/>
<rect x="1712" y="102" width="11.5" height="1" fill="#888"/>
<rect x="1709.5" y="105" width="1.5" height="1" fill="#888"/>
<rect x="1712" y="105" width="11.5" height="1" fill="#888"/>
<rect x="1708" y="109" width="17" height="1" fill="#7a7a7a"/>
<rect x="1708" y="117" width="17" height="1" fill="#7a7a7a"/>
<rect x="1716" y="109" width="1" height="16" fill="#7a7a7a"/>
<rect x="1709.5" y="111.5" width="4" height="0.9" fill="#888"/>
<rect x="1718.5" y="111.5" width="4" height="0.9" fill="#888"/>
<rect x="1709.5" y="119.5" width="4" height="0.9" fill="#888"/>
<rect x="1718.5" y="119.5" width="4" height="0.9" fill="#888"/>
<text x="1701.50" y="145.50" font-size="15.5" fill="#262626" textLength="30.97" lengthAdjust="spacingAndGlyphs">Field</text>
<text x="1706.00" y="165.50" font-size="15.5" fill="#262626" textLength="21.82" lengthAdjust="spacingAndGlyphs">List</text>
<rect x="1754" y="91" width="20" height="20" fill="#7a7a7a"/>
<rect x="1755" y="92" width="18" height="18" fill="#ffffff"/>
<rect x="1757.2" y="99" width="12.8" height="2.6" fill="#4a7ebb"/>
<rect x="1762.3" y="94" width="2.6" height="12.8" fill="#4a7ebb"/>
<rect x="1767" y="104" width="22" height="22" fill="#c6c6c6"/>
<rect x="1768" y="105" width="20" height="20" fill="#7a7a7a"/>
<rect x="1769" y="106" width="18" height="18" fill="#ffffff"/>
<rect x="1772" y="113.2" width="13" height="2.6" fill="#4a7ebb"/>
<text x="1760.60" y="145.50" font-size="15.5" fill="#262626" textLength="21.10" lengthAdjust="spacingAndGlyphs">+/-</text>
<text x="1746.50" y="165.50" font-size="15.5" fill="#262626" textLength="49.32" lengthAdjust="spacingAndGlyphs">Buttons</text>
<rect x="1812" y="98" width="33" height="25" fill="#8a8a8a"/>
<rect x="1820" y="92" width="25" height="7" fill="#4a7ebb"/>
<rect x="1812" y="98" width="8.5" height="7" fill="#4a7ebb"/>
<rect x="1813" y="105" width="7" height="5" fill="#ffffff"/>
<rect x="1813" y="111" width="7" height="5" fill="#ffffff"/>
<rect x="1813" y="117" width="7" height="5" fill="#ffffff"/>
<rect x="1821" y="99" width="7" height="5" fill="#ffffff"/>
<rect x="1821" y="105" width="7" height="5" fill="#ffffff"/>
<rect x="1821" y="111" width="7" height="5" fill="#ffffff"/>
<rect x="1821" y="117" width="7" height="5" fill="#ffffff"/>
<rect x="1829" y="99" width="7" height="5" fill="#ffffff"/>
<rect x="1829" y="105" width="7" height="5" fill="#ffffff"/>
<rect x="1829" y="111" width="7" height="5" fill="#ffffff"/>
<rect x="1829" y="117" width="7" height="5" fill="#ffffff"/>
<rect x="1837" y="99" width="7" height="5" fill="#ffffff"/>
<rect x="1837" y="105" width="7" height="5" fill="#ffffff"/>
<rect x="1837" y="111" width="7" height="5" fill="#ffffff"/>
<rect x="1837" y="117" width="7" height="5" fill="#ffffff"/>
<path d="M1823.5,94 H1829 L1826.25,97 Z" fill="#fff"/>
<path d="M1814.3,100 H1819.3 L1816.8,103 Z" fill="#fff"/>
<rect x="1813" y="105" width="7" height="5" fill="#fff"/>
<rect x="1813" y="111" width="7" height="5" fill="#fff"/>
<rect x="1813" y="117" width="7" height="5" fill="#fff"/>
<text x="1813.30" y="145.50" font-size="15.5" fill="#262626" textLength="30.97" lengthAdjust="spacingAndGlyphs">Field</text>
<text x="1802.30" y="165.50" font-size="15.5" fill="#262626" textLength="54.40" lengthAdjust="spacingAndGlyphs">Headers</text>
<text x="1758.30" y="190.00" font-size="13" fill="#262626" textLength="30.36" lengthAdjust="spacingAndGlyphs">Show</text>
<path d="M1897,189.5 L1902.75,183.5 L1908.5,189.5" fill="none" stroke="#444" stroke-width="1.2"/>
<rect x="6" y="208" width="127" height="30" fill="#c6c6c6"/>
<rect x="7" y="209" width="125" height="28" fill="#ffffff"/>
<text x="13.50" y="229.00" font-size="15.5" fill="#262626" textLength="17.97" lengthAdjust="spacingAndGlyphs">A7</text>
<path d="M117,222.5 H125 L121,227 Z" fill="#7a7a7a"/>
<rect x="150" y="216" width="2.5" height="2.5" fill="#a6a6a6"/>
<rect x="150" y="221.5" width="2.5" height="2.5" fill="#a6a6a6"/>
<rect x="150" y="227" width="2.5" height="2.5" fill="#a6a6a6"/>
<rect x="170" y="208" width="137" height="30" fill="#c6c6c6"/>
<rect x="171" y="209" width="135" height="28" fill="#ffffff"/>
<path d="M185.5,217 L199.5,229.3 M199.5,217 L185.5,229.3" fill="none" stroke="#b7b7b7" stroke-width="1.5"/>
<path d="M230.5,223.5 L236,229.5 L247,217.5" fill="none" stroke="#c6c6c6" stroke-width="2.4"/>
<text x="273" y="229.5" font-family="Liberation Serif" font-style="italic" font-weight="700" font-size="20" fill="#555" textLength="17" lengthAdjust="spacingAndGlyphs">fx</text>
<rect x="310" y="208" width="1604" height="30" fill="#c6c6c6"/>
<rect x="311" y="209" width="1602" height="28" fill="#ffffff"/>
<text x="324.20" y="229.00" font-size="15.5" fill="#262626" textLength="41.07" lengthAdjust="spacingAndGlyphs">South</text>
<path d="M1899,220 L1903.5,222.5 L1908,220 V222.5 L1903.5,226 L1899,222.5 Z" fill="#7a7a7a"/>
<rect x="34" y="274" width="1423" height="688" fill="#ffffff"/>
<rect x="146" y="274" width="1" height="688" fill="#d4d4d4"/>
<rect x="283" y="274" width="1" height="688" fill="#d4d4d4"/>
<rect x="363" y="274" width="1" height="688" fill="#d4d4d4"/>
<rect x="443" y="274" width="1" height="688" fill="#d4d4d4"/>
<rect x="523" y="274" width="1" height="688" fill="#d4d4d4"/>
<rect x="603" y="274" width="1" height="688" fill="#d4d4d4"/>
<rect x="683" y="274" width="1" height="688" fill="#d4d4d4"/>
<rect x="763" y="274" width="1" height="688" fill="#d4d4d4"/>
<rect x="843" y="274" width="1" height="688" fill="#d4d4d4"/>
<rect x="923" y="274" width="1" height="688" fill="#d4d4d4"/>
<rect x="1003" y="274" width="1" height="688" fill="#d4d4d4"/>
<rect x="1083" y="274" width="1" height="688" fill="#d4d4d4"/>
<rect x="1163" y="274" width="1" height="688" fill="#d4d4d4"/>
<rect x="1243" y="274" width="1" height="688" fill="#d4d4d4"/>
<rect x="1323" y="274" width="1" height="688" fill="#d4d4d4"/>
<rect x="1403" y="274" width="1" height="688" fill="#d4d4d4"/>
<rect x="34" y="297" width="1423" height="1" fill="#d4d4d4"/>
<rect x="34" y="321" width="1423" height="1" fill="#d4d4d4"/>
<rect x="34" y="345" width="1423" height="1" fill="#d4d4d4"/>
<rect x="34" y="369" width="1423" height="1" fill="#d4d4d4"/>
<rect x="34" y="393" width="1423" height="1" fill="#d4d4d4"/>
<rect x="34" y="417" width="1423" height="1" fill="#d4d4d4"/>
<rect x="34" y="441" width="1423" height="1" fill="#d4d4d4"/>
<rect x="34" y="465" width="1423" height="1" fill="#d4d4d4"/>
<rect x="34" y="489" width="1423" height="1" fill="#d4d4d4"/>
<rect x="34" y="513" width="1423" height="1" fill="#d4d4d4"/>
<rect x="34" y="537" width="1423" height="1" fill="#d4d4d4"/>
<rect x="34" y="561" width="1423" height="1" fill="#d4d4d4"/>
<rect x="34" y="585" width="1423" height="1" fill="#d4d4d4"/>
<rect x="34" y="609" width="1423" height="1" fill="#d4d4d4"/>
<rect x="34" y="633" width="1423" height="1" fill="#d4d4d4"/>
<rect x="34" y="657" width="1423" height="1" fill="#d4d4d4"/>
<rect x="34" y="681" width="1423" height="1" fill="#d4d4d4"/>
<rect x="34" y="705" width="1423" height="1" fill="#d4d4d4"/>
<rect x="34" y="729" width="1423" height="1" fill="#d4d4d4"/>
<rect x="34" y="753" width="1423" height="1" fill="#d4d4d4"/>
<rect x="34" y="777" width="1423" height="1" fill="#d4d4d4"/>
<rect x="34" y="801" width="1423" height="1" fill="#d4d4d4"/>
<rect x="34" y="825" width="1423" height="1" fill="#d4d4d4"/>
<rect x="34" y="849" width="1423" height="1" fill="#d4d4d4"/>
<rect x="34" y="873" width="1423" height="1" fill="#d4d4d4"/>
<rect x="34" y="897" width="1423" height="1" fill="#d4d4d4"/>
<rect x="34" y="921" width="1423" height="1" fill="#d4d4d4"/>
<rect x="34" y="945" width="1423" height="1" fill="#d4d4d4"/>
<rect x="34" y="274" width="250" height="47" fill="#d9e1f2"/>
<rect x="34" y="321" width="250" height="1" fill="#8ea9db"/>
<rect x="34" y="346" width="250" height="23" fill="#d9e1f2"/>
<rect x="34" y="369" width="250" height="1" fill="#8ea9db"/>
<rect x="34" y="370" width="249" height="143" fill="#ffffff"/>
<rect x="34" y="393" width="250" height="1" fill="#8ea9db"/>
<rect x="34" y="441" width="250" height="1" fill="#8ea9db"/>
<rect x="34" y="489" width="250" height="1" fill="#8ea9db"/>
<rect x="34" y="513" width="250" height="1" fill="#8ea9db"/>
<rect x="34" y="514" width="250" height="24" fill="#d9e1f2"/>
<text x="37.50" y="292.00" font-size="17" fill="#000" textLength="88.73" lengthAdjust="spacingAndGlyphs">Sales Month</text>
<text x="150.30" y="292.00" font-size="17" fill="#000" textLength="27.36" lengthAdjust="spacingAndGlyphs">(All)</text>
<text x="37.50" y="316.00" font-size="17" fill="#000" textLength="63.32" lengthAdjust="spacingAndGlyphs">Products</text>
<text x="150.30" y="316.00" font-size="17" fill="#000" textLength="27.36" lengthAdjust="spacingAndGlyphs">(All)</text>
<rect x="262" y="275" width="21" height="21" fill="#b9b9b9"/>
<rect x="263" y="276" width="19" height="19" fill="#fdfdfd"/>
<path d="M268.5,284 H276.5 L272.5,288 Z" fill="#595959"/>
<rect x="262" y="299" width="21" height="21" fill="#b9b9b9"/>
<rect x="263" y="300" width="19" height="19" fill="#fdfdfd"/>
<path d="M268.5,308 H276.5 L272.5,312 Z" fill="#595959"/>
<text x="37.50" y="364.00" font-size="17" fill="#000" font-weight="700" textLength="82.83" lengthAdjust="spacingAndGlyphs">Row Labels</text>
<rect x="125" y="347" width="21" height="21" fill="#b9b9b9"/>
<rect x="126" y="348" width="19" height="19" fill="#fdfdfd"/>
<path d="M131.5,356 H139.5 L135.5,360 Z" fill="#595959"/>
<text x="150.30" y="364.00" font-size="17" fill="#000" font-weight="700" textLength="126.29" lengthAdjust="spacingAndGlyphs">Sum of Net Sales</text>
<rect x="41" y="376" width="11" height="11" fill="#a5b4d2" rx="2"/>
<rect x="42" y="377" width="9" height="9" fill="#ebebeb" rx="1.5"/>
<rect x="43.5" y="381" width="6" height="1.3" fill="#3b4e8c"/>
<text x="55.30" y="388.00" font-size="17" fill="#000" font-weight="700" textLength="42.82" lengthAdjust="spacingAndGlyphs">North</text>
<text x="226.60" y="388.00" font-size="17" fill="#000" font-weight="700" textLength="52.83" lengthAdjust="spacingAndGlyphs">134716</text>
<text x="73.30" y="412.00" font-size="17" fill="#000" textLength="35.00" lengthAdjust="spacingAndGlyphs">2016</text>
<text x="226.70" y="412.00" font-size="17" fill="#000" textLength="52.53" lengthAdjust="spacingAndGlyphs">134716</text>
<rect x="41" y="424" width="11" height="11" fill="#a5b4d2" rx="2"/>
<rect x="42" y="425" width="9" height="9" fill="#ebebeb" rx="1.5"/>
<rect x="43.5" y="429" width="6" height="1.3" fill="#3b4e8c"/>
<text x="55.30" y="436.00" font-size="17" fill="#000" font-weight="700" textLength="44.06" lengthAdjust="spacingAndGlyphs">South</text>
<text x="226.60" y="436.00" font-size="17" fill="#000" font-weight="700" textLength="52.83" lengthAdjust="spacingAndGlyphs">140016</text>
<text x="73.30" y="460.00" font-size="17" fill="#000" textLength="35.00" lengthAdjust="spacingAndGlyphs">2016</text>
<text x="226.70" y="460.00" font-size="17" fill="#000" textLength="52.53" lengthAdjust="spacingAndGlyphs">140016</text>
<rect x="41" y="472" width="11" height="11" fill="#a5b4d2" rx="2"/>
<rect x="42" y="473" width="9" height="9" fill="#ebebeb" rx="1.5"/>
<rect x="43.5" y="477" width="6" height="1.3" fill="#3b4e8c"/>
<text x="55.30" y="484.00" font-size="17" fill="#000" font-weight="700" textLength="37.42" lengthAdjust="spacingAndGlyphs">West</text>
<text x="226.60" y="484.00" font-size="17" fill="#000" font-weight="700" textLength="52.83" lengthAdjust="spacingAndGlyphs">121238</text>
<text x="73.30" y="508.00" font-size="17" fill="#000" textLength="35.00" lengthAdjust="spacingAndGlyphs">2016</text>
<text x="226.70" y="508.00" font-size="17" fill="#000" textLength="52.53" lengthAdjust="spacingAndGlyphs">121238</text>
<text x="37.00" y="532.00" font-size="17" fill="#000" font-weight="700" textLength="87.43" lengthAdjust="spacingAndGlyphs">Grand Total</text>
<text x="226.70" y="532.00" font-size="17" fill="#000" font-weight="700" textLength="52.53" lengthAdjust="spacingAndGlyphs">395970</text>
<rect x="0" y="250" width="1457" height="23" fill="#e6e6e6"/>
<rect x="34" y="250" width="112" height="23" fill="#d2d2d2"/>
<rect x="146" y="250" width="1" height="23" fill="#c6c6c6"/>
<rect x="283" y="250" width="1" height="23" fill="#c6c6c6"/>
<rect x="363" y="250" width="1" height="23" fill="#c6c6c6"/>
<rect x="443" y="250" width="1" height="23" fill="#c6c6c6"/>
<rect x="523" y="250" width="1" height="23" fill="#c6c6c6"/>
<rect x="603" y="250" width="1" height="23" fill="#c6c6c6"/>
<rect x="683" y="250" width="1" height="23" fill="#c6c6c6"/>
<rect x="763" y="250" width="1" height="23" fill="#c6c6c6"/>
<rect x="843" y="250" width="1" height="23" fill="#c6c6c6"/>
<rect x="923" y="250" width="1" height="23" fill="#c6c6c6"/>
<rect x="1003" y="250" width="1" height="23" fill="#c6c6c6"/>
<rect x="1083" y="250" width="1" height="23" fill="#c6c6c6"/>
<rect x="1163" y="250" width="1" height="23" fill="#c6c6c6"/>
<rect x="1243" y="250" width="1" height="23" fill="#c6c6c6"/>
<rect x="1323" y="250" width="1" height="23" fill="#c6c6c6"/>
<rect x="1403" y="250" width="1" height="23" fill="#c6c6c6"/>
<rect x="33" y="250" width="1" height="23" fill="#b4b4b4"/>
<rect x="0" y="273" width="1457" height="1" fill="#ababab"/>
<rect x="34" y="272" width="112" height="2" fill="#217346"/>
<path d="M14.5,270 H30 V254.5 Z" fill="#b4b4b4"/>
<text x="84.47" y="268.20" font-size="16.5" fill="#217346" textLength="11.01" lengthAdjust="spacingAndGlyphs">A</text>
<text x="209.51" y="268.20" font-size="16.5" fill="#262626" textLength="11.01" lengthAdjust="spacingAndGlyphs">B</text>
<text x="317.56" y="268.20" font-size="16.5" fill="#262626" textLength="11.92" lengthAdjust="spacingAndGlyphs">C</text>
<text x="397.56" y="268.20" font-size="16.5" fill="#262626" textLength="11.92" lengthAdjust="spacingAndGlyphs">D</text>
<text x="478.01" y="268.20" font-size="16.5" fill="#262626" textLength="11.01" lengthAdjust="spacingAndGlyphs">E</text>
<text x="558.47" y="268.20" font-size="16.5" fill="#262626" textLength="10.08" lengthAdjust="spacingAndGlyphs">F</text>
<text x="637.07" y="268.20" font-size="16.5" fill="#262626" textLength="12.83" lengthAdjust="spacingAndGlyphs">G</text>
<text x="717.56" y="268.20" font-size="16.5" fill="#262626" textLength="11.92" lengthAdjust="spacingAndGlyphs">H</text>
<text x="801.19" y="268.20" font-size="16.5" fill="#262626" textLength="4.58" lengthAdjust="spacingAndGlyphs">I</text>
<text x="879.38" y="268.20" font-size="16.5" fill="#262626" textLength="8.25" lengthAdjust="spacingAndGlyphs">J</text>
<text x="958.01" y="268.20" font-size="16.5" fill="#262626" textLength="11.01" lengthAdjust="spacingAndGlyphs">K</text>
<text x="1038.92" y="268.20" font-size="16.5" fill="#262626" textLength="9.18" lengthAdjust="spacingAndGlyphs">L</text>
<text x="1116.61" y="268.20" font-size="16.5" fill="#262626" textLength="13.75" lengthAdjust="spacingAndGlyphs">M</text>
<text x="1197.56" y="268.20" font-size="16.5" fill="#262626" textLength="11.92" lengthAdjust="spacingAndGlyphs">N</text>
<text x="1277.07" y="268.20" font-size="16.5" fill="#262626" textLength="12.83" lengthAdjust="spacingAndGlyphs">O</text>
<text x="1358.01" y="268.20" font-size="16.5" fill="#262626" textLength="11.01" lengthAdjust="spacingAndGlyphs">P</text>
<text x="1437.57" y="268.20" font-size="16.5" fill="#262626" textLength="12.83" lengthAdjust="spacingAndGlyphs">Q</text>
<rect x="0" y="274" width="33" height="688" fill="#e6e6e6"/>
<rect x="0" y="418" width="33" height="23" fill="#d2d2d2"/>
<rect x="0" y="297" width="33" height="1" fill="#c6c6c6"/>
<rect x="0" y="321" width="33" height="1" fill="#c6c6c6"/>
<rect x="0" y="345" width="33" height="1" fill="#c6c6c6"/>
<rect x="0" y="369" width="33" height="1" fill="#c6c6c6"/>
<rect x="0" y="393" width="33" height="1" fill="#c6c6c6"/>
<rect x="0" y="417" width="33" height="1" fill="#c6c6c6"/>
<rect x="0" y="441" width="33" height="1" fill="#c6c6c6"/>
<rect x="0" y="465" width="33" height="1" fill="#c6c6c6"/>
<rect x="0" y="489" width="33" height="1" fill="#c6c6c6"/>
<rect x="0" y="513" width="33" height="1" fill="#c6c6c6"/>
<rect x="0" y="537" width="33" height="1" fill="#c6c6c6"/>
<rect x="0" y="561" width="33" height="1" fill="#c6c6c6"/>
<rect x="0" y="585" width="33" height="1" fill="#c6c6c6"/>
<rect x="0" y="609" width="33" height="1" fill="#c6c6c6"/>
<rect x="0" y="633" width="33" height="1" fill="#c6c6c6"/>
<rect x="0" y="657" width="33" height="1" fill="#c6c6c6"/>
<rect x="0" y="681" width="33" height="1" fill="#c6c6c6"/>
<rect x="0" y="705" width="33" height="1" fill="#c6c6c6"/>
<rect x="0" y="729" width="33" height="1" fill="#c6c6c6"/>
<rect x="0" y="753" width="33" height="1" fill="#c6c6c6"/>
<rect x="0" y="777" width="33" height="1" fill="#c6c6c6"/>
<rect x="0" y="801" width="33" height="1" fill="#c6c6c6"/>
<rect x="0" y="825" width="33" height="1" fill="#c6c6c6"/>
<rect x="0" y="849" width="33" height="1" fill="#c6c6c6"/>
<rect x="0" y="873" width="33" height="1" fill="#c6c6c6"/>
<rect x="0" y="897" width="33" height="1" fill="#c6c6c6"/>
<rect x="0" y="921" width="33" height="1" fill="#c6c6c6"/>
<rect x="0" y="945" width="33" height="1" fill="#c6c6c6"/>
<rect x="33" y="274" width="1" height="688" fill="#ababab"/>
<text x="12.22" y="292.00" font-size="16.5" fill="#262626" textLength="9.18" lengthAdjust="spacingAndGlyphs">1</text>
<text x="12.22" y="316.00" font-size="16.5" fill="#262626" textLength="9.18" lengthAdjust="spacingAndGlyphs">2</text>
<text x="12.22" y="340.00" font-size="16.5" fill="#262626" textLength="9.18" lengthAdjust="spacingAndGlyphs">3</text>
<text x="12.22" y="364.00" font-size="16.5" fill="#262626" textLength="9.18" lengthAdjust="spacingAndGlyphs">4</text>
<text x="12.22" y="388.00" font-size="16.5" fill="#262626" textLength="9.18" lengthAdjust="spacingAndGlyphs">5</text>
<text x="12.22" y="412.00" font-size="16.5" fill="#262626" textLength="9.18" lengthAdjust="spacingAndGlyphs">6</text>
<text x="12.22" y="436.00" font-size="16.5" fill="#217346" textLength="9.18" lengthAdjust="spacingAndGlyphs">7</text>
<text x="12.22" y="460.00" font-size="16.5" fill="#262626" textLength="9.18" lengthAdjust="spacingAndGlyphs">8</text>
<text x="12.22" y="484.00" font-size="16.5" fill="#262626" textLength="9.18" lengthAdjust="spacingAndGlyphs">9</text>
<text x="7.64" y="508.00" font-size="16.5" fill="#262626" textLength="18.35" lengthAdjust="spacingAndGlyphs">10</text>
<text x="8.22" y="532.00" font-size="16.5" fill="#262626" textLength="17.13" lengthAdjust="spacingAndGlyphs">11</text>
<text x="7.64" y="556.00" font-size="16.5" fill="#262626" textLength="18.35" lengthAdjust="spacingAndGlyphs">12</text>
<text x="7.64" y="580.00" font-size="16.5" fill="#262626" textLength="18.35" lengthAdjust="spacingAndGlyphs">13</text>
<text x="7.64" y="604.00" font-size="16.5" fill="#262626" textLength="18.35" lengthAdjust="spacingAndGlyphs">14</text>
<text x="7.64" y="628.00" font-size="16.5" fill="#262626" textLength="18.35" lengthAdjust="spacingAndGlyphs">15</text>
<text x="7.64" y="652.00" font-size="16.5" fill="#262626" textLength="18.35" lengthAdjust="spacingAndGlyphs">16</text>
<text x="7.64" y="676.00" font-size="16.5" fill="#262626" textLength="18.35" lengthAdjust="spacingAndGlyphs">17</text>
<text x="7.64" y="700.00" font-size="16.5" fill="#262626" textLength="18.35" lengthAdjust="spacingAndGlyphs">18</text>
<text x="7.64" y="724.00" font-size="16.5" fill="#262626" textLength="18.35" lengthAdjust="spacingAndGlyphs">19</text>
<text x="7.64" y="748.00" font-size="16.5" fill="#262626" textLength="18.35" lengthAdjust="spacingAndGlyphs">20</text>
<text x="7.64" y="772.00" font-size="16.5" fill="#262626" textLength="18.35" lengthAdjust="spacingAndGlyphs">21</text>
<text x="7.64" y="796.00" font-size="16.5" fill="#262626" textLength="18.35" lengthAdjust="spacingAndGlyphs">22</text>
<text x="7.64" y="820.00" font-size="16.5" fill="#262626" textLength="18.35" lengthAdjust="spacingAndGlyphs">23</text>
<text x="7.64" y="844.00" font-size="16.5" fill="#262626" textLength="18.35" lengthAdjust="spacingAndGlyphs">24</text>
<text x="7.64" y="868.00" font-size="16.5" fill="#262626" textLength="18.35" lengthAdjust="spacingAndGlyphs">25</text>
<text x="7.64" y="892.00" font-size="16.5" fill="#262626" textLength="18.35" lengthAdjust="spacingAndGlyphs">26</text>
<text x="7.64" y="916.00" font-size="16.5" fill="#262626" textLength="18.35" lengthAdjust="spacingAndGlyphs">27</text>
<text x="7.64" y="940.00" font-size="16.5" fill="#262626" textLength="18.35" lengthAdjust="spacingAndGlyphs">28</text>
<text x="7.64" y="964.00" font-size="16.5" fill="#262626" textLength="18.35" lengthAdjust="spacingAndGlyphs">29</text>
<rect x="1456" y="273" width="1" height="689" fill="#ababab"/>
<rect x="32" y="416" width="116" height="2" fill="#217346"/>
<rect x="32" y="441" width="116" height="2" fill="#217346"/>
<rect x="32" y="416" width="2" height="27" fill="#217346"/>
<rect x="146" y="416" width="2" height="27" fill="#217346"/>
<rect x="142.5" y="438" width="7.5" height="7.5" fill="#ffffff"/>
<rect x="143.5" y="439" width="5.5" height="5.5" fill="#217346"/>
<rect x="1457" y="250" width="26" height="712" fill="#e6e6e6"/>
<rect x="1460" y="252" width="19" height="710" fill="#f3f3f3"/>
<rect x="1460" y="252" width="19" height="20" fill="#a0a0a0"/>
<rect x="1461" y="253" width="17" height="18" fill="#ffffff"/>
<path d="M1465.3,264.5 H1474.3 L1469.8,258.5 Z" fill="#222"/>
<rect x="1460" y="271" width="19" height="627" fill="#a0a0a0"/>
<rect x="1461" y="272" width="17" height="625" fill="#ffffff"/>
<rect x="1460" y="271" width="19" height="1.5" fill="#a0a0a0"/>
<rect x="1460" y="943" width="19" height="19" fill="#a0a0a0"/>
<rect x="1461" y="944" width="17" height="17" fill="#ffffff"/>
<path d="M1465.3,950 H1474.3 L1469.8,956 Z" fill="#222"/>
<rect x="1482" y="252" width="1" height="739" fill="#c6c6c6"/>
<defs><linearGradient id="yel" x1="0" y1="0" x2="0" y2="1"><stop offset="0" stop-color="#f8df6e"/><stop offset="0.55" stop-color="#fae9a0"/><stop offset="1" stop-color="#fdf7d6"/></linearGradient><linearGradient id="selg" x1="0" y1="0" x2="0" y2="1"><stop offset="0" stop-color="#b7c8e8"/><stop offset="1" stop-color="#b1c4e6"/></linearGradient></defs>
<rect x="508" y="278" width="240" height="324" fill="#4f7ac7"/>
<rect x="509" y="279" width="238" height="322" fill="#ffffff"/>
<text x="519.30" y="301.00" font-size="17" fill="#000" font-weight="700" textLength="93.10" lengthAdjust="spacingAndGlyphs">Sales Month</text>
<path d="M675.3,288.3 L677.2,290.7 L681.2,285.7" fill="none" stroke="#6a6a6a" stroke-width="1.3"/>
<rect x="683" y="287.7" width="9.8" height="1.2" fill="#6a6a6a"/>
<path d="M675.3,294.3 L677.2,296.7 L681.2,291.7" fill="none" stroke="#6a6a6a" stroke-width="1.3"/>
<rect x="683" y="293.7" width="9.8" height="1.2" fill="#6a6a6a"/>
<path d="M675.3,300.3 L677.2,302.7 L681.2,297.7" fill="none" stroke="#6a6a6a" stroke-width="1.3"/>
<rect x="683" y="299.7" width="9.8" height="1.2" fill="#6a6a6a"/>
<path d="M714,284.7 H728 L721.8,291.0 V297.2 H719.2 V291.0 Z" fill="#9a9a9a"/>
<path d="M715.8,285.8 L720.3,290.5 V296.2" fill="none" stroke="#ffffff" stroke-width="0.9"/>
<path d="M723.3,294.7 L732.3,303.0 M731.6,295.3 L723.3,302.7" fill="none" stroke="#a6a6a6" stroke-width="1.9"/>
<rect x="519" y="310.5" width="218" height="1.5" fill="#4472c4"/>
<defs><clipPath id="sc508"><rect x="509" y="316" width="238" height="274.5"/></clipPath></defs><g clip-path="url(#sc508)">
<rect x="519.5" y="317.5" width="190" height="30.5" fill="#b4c6e7" stroke="#8b8b8b" stroke-width="1" rx="3.5"/>
<rect x="521.5" y="347.0" width="186" height="1" fill="#8a8a8a"/>
<text x="530.50" y="338.80" font-size="17" fill="#000" textLength="32.49" lengthAdjust="spacingAndGlyphs">May</text>
<rect x="519.5" y="352.5" width="190" height="30.5" fill="#b4c6e7" stroke="#8b8b8b" stroke-width="1" rx="3.5"/>
<rect x="521.5" y="382.0" width="186" height="1" fill="#8a8a8a"/>
<text x="530.50" y="373.80" font-size="17" fill="#000" textLength="33.98" lengthAdjust="spacingAndGlyphs">June</text>
<rect x="519.5" y="387.5" width="190" height="30.5" fill="#b4c6e7" stroke="#8b8b8b" stroke-width="1" rx="3.5"/>
<rect x="521.5" y="417.0" width="186" height="1" fill="#8a8a8a"/>
<text x="530.50" y="408.80" font-size="17" fill="#000" textLength="27.77" lengthAdjust="spacingAndGlyphs">July</text>
<rect x="519.5" y="422.5" width="190" height="30.5" fill="#b4c6e7" stroke="#8b8b8b" stroke-width="1" rx="3.5"/>
<rect x="521.5" y="452.0" width="186" height="1" fill="#8a8a8a"/>
<text x="530.50" y="443.80" font-size="17" fill="#000" textLength="52.87" lengthAdjust="spacingAndGlyphs">August</text>
<rect x="519.5" y="457.5" width="190" height="30.5" fill="#b4c6e7" stroke="#8b8b8b" stroke-width="1" rx="3.5"/>
<rect x="521.5" y="487.0" width="186" height="1" fill="#8a8a8a"/>
<text x="530.50" y="478.80" font-size="17" fill="#000" textLength="82.73" lengthAdjust="spacingAndGlyphs">September</text>
<rect x="519.5" y="492.5" width="190" height="30.5" fill="#b4c6e7" stroke="#8b8b8b" stroke-width="1" rx="3.5"/>
<rect x="521.5" y="522.0" width="186" height="1" fill="#8a8a8a"/>
<text x="530.50" y="513.80" font-size="17" fill="#000" textLength="61.54" lengthAdjust="spacingAndGlyphs">October</text>
<rect x="519.5" y="527.5" width="190" height="30.5" fill="#d9e0f1" stroke="#c8cad0" stroke-width="1" rx="3.5"/>
<text x="530.50" y="548.80" font-size="17" fill="#8c8c8c" textLength="58.66" lengthAdjust="spacingAndGlyphs">January</text>
<rect x="519.5" y="562.5" width="190" height="30.5" fill="#d9e0f1" stroke="#c8cad0" stroke-width="1" rx="3.5"/>
<text x="530.50" y="583.80" font-size="17" fill="#8c8c8c" textLength="69.03" lengthAdjust="spacingAndGlyphs">February</text>
</g>
<rect x="715" y="317" width="22" height="273.5" fill="#efefef"/>
<rect x="723" y="340" width="5" height="37" fill="#8a8a8a"/>
<rect x="757" y="273" width="240" height="324" fill="#4f7ac7"/>
<rect x="758" y="274" width="238" height="322" fill="#ffffff"/>
<text x="768.30" y="296.00" font-size="17" fill="#000" font-weight="700" textLength="70.69" lengthAdjust="spacingAndGlyphs">Salesman</text>
<path d="M924.3,283.0 L926.2,285.4 L930.2,280.4" fill="none" stroke="#6a6a6a" stroke-width="1.3"/>
<rect x="932" y="282.4" width="9.8" height="1.2" fill="#6a6a6a"/>
<path d="M924.3,289.0 L926.2,291.4 L930.2,286.4" fill="none" stroke="#6a6a6a" stroke-width="1.3"/>
<rect x="932" y="288.4" width="9.8" height="1.2" fill="#6a6a6a"/>
<path d="M924.3,295.0 L926.2,297.4 L930.2,292.4" fill="none" stroke="#6a6a6a" stroke-width="1.3"/>
<rect x="932" y="294.4" width="9.8" height="1.2" fill="#6a6a6a"/>
<path d="M963,280.2 H977 L970.8,286.5 V292.7 H968.2 V286.5 Z" fill="#6e6e6e"/>
<path d="M964.8,281.3 L969.3,286.0 V291.7" fill="none" stroke="#ffffff" stroke-width="0.9"/>
<path d="M972.3,290.2 L981.3,298.5 M980.6,290.8 L972.3,298.2" fill="none" stroke="#d5502b" stroke-width="1.9"/>
<rect x="768" y="305.5" width="218" height="1.5" fill="#4472c4"/>
<defs><clipPath id="sc757"><rect x="758" y="311" width="238" height="274.5"/></clipPath></defs><g clip-path="url(#sc757)">
<rect x="768.5" y="312.5" width="190" height="30.5" fill="#ffffff" stroke="#c8c8c8" stroke-width="1" rx="3.5"/>
<text x="779.50" y="333.80" font-size="17" fill="#000" textLength="31.04" lengthAdjust="spacingAndGlyphs">Jack</text>
<rect x="768.5" y="347.5" width="190" height="30.5" fill="#ffffff" stroke="#c8c8c8" stroke-width="1" rx="3.5"/>
<text x="779.50" y="368.80" font-size="17" fill="#000" textLength="25.88" lengthAdjust="spacingAndGlyphs">Leo</text>
<rect x="768.5" y="382.5" width="190" height="30.5" fill="#ffffff" stroke="#c8c8c8" stroke-width="1" rx="3.5"/>
<text x="779.50" y="403.80" font-size="17" fill="#000" textLength="51.73" lengthAdjust="spacingAndGlyphs">Robert</text>
<rect x="768.5" y="417.5" width="190" height="30.5" fill="url(#yel)" stroke="#9d9d9d" stroke-width="1" rx="3.5"/>
<rect x="769.5" y="447.0" width="188" height="1" fill="#888"/>
<text x="779.50" y="438.80" font-size="17" fill="#000" textLength="43.07" lengthAdjust="spacingAndGlyphs">Robin</text>
<rect x="768.5" y="452.5" width="190" height="30.5" fill="#ffffff" stroke="#c8c8c8" stroke-width="1" rx="3.5"/>
<text x="779.50" y="473.80" font-size="17" fill="#000" textLength="62.00" lengthAdjust="spacingAndGlyphs">Ronaldo</text>
<rect x="768.5" y="487.5" width="190" height="30.5" fill="#ffffff" stroke="#c8c8c8" stroke-width="1" rx="3.5"/>
<text x="779.50" y="508.80" font-size="17" fill="#000" textLength="55.11" lengthAdjust="spacingAndGlyphs">Samuel</text>
<rect x="768.5" y="522.5" width="190" height="30.5" fill="#ffffff" stroke="#c8c8c8" stroke-width="1" rx="3.5"/>
<text x="779.50" y="543.80" font-size="17" fill="#000" textLength="72.87" lengthAdjust="spacingAndGlyphs">Sebastian</text>
<rect x="768.5" y="557.5" width="190" height="30.5" fill="#ffffff" stroke="#c8c8c8" stroke-width="1" rx="3.5"/>
<text x="779.50" y="578.80" font-size="17" fill="#000" textLength="41.44" lengthAdjust="spacingAndGlyphs">Steve</text>
</g>
<rect x="964" y="312" width="22" height="273.5" fill="#efefef"/>
<rect x="972" y="335" width="5" height="176.5" fill="#8a8a8a"/>
<rect x="1009" y="273" width="240" height="324" fill="#4f7ac7"/>
<rect x="1010" y="274" width="238" height="322" fill="#ffffff"/>
<text x="1020.30" y="296.00" font-size="17" fill="#000" font-weight="700" textLength="66.49" lengthAdjust="spacingAndGlyphs">Products</text>
<path d="M1176.3,283.0 L1178.2,285.4 L1182.2,280.4" fill="none" stroke="#6a6a6a" stroke-width="1.3"/>
<rect x="1184" y="282.4" width="9.8" height="1.2" fill="#6a6a6a"/>
<path d="M1176.3,289.0 L1178.2,291.4 L1182.2,286.4" fill="none" stroke="#6a6a6a" stroke-width="1.3"/>
<rect x="1184" y="288.4" width="9.8" height="1.2" fill="#6a6a6a"/>
<path d="M1176.3,295.0 L1178.2,297.4 L1182.2,292.4" fill="none" stroke="#6a6a6a" stroke-width="1.3"/>
<rect x="1184" y="294.4" width="9.8" height="1.2" fill="#6a6a6a"/>
<path d="M1215.5,280.2 H1229.5 L1223.3,286.5 V292.7 H1220.7 V286.5 Z" fill="#9a9a9a"/>
<path d="M1217.3,281.3 L1221.8,286.0 V291.7" fill="none" stroke="#ffffff" stroke-width="0.9"/>
<path d="M1224.8,290.2 L1233.8,298.5 M1233.1,290.8 L1224.8,298.2" fill="none" stroke="#a6a6a6" stroke-width="1.9"/>
<rect x="1020" y="305" width="218" height="1.5" fill="#4472c4"/>
<defs><clipPath id="sc1009"><rect x="1010" y="311" width="238" height="274.5"/></clipPath></defs><g clip-path="url(#sc1009)">
<rect x="1020.5" y="312.5" width="190" height="30.5" fill="#b4c6e7" stroke="#8b8b8b" stroke-width="1" rx="3.5"/>
<rect x="1022.5" y="342.0" width="186" height="1" fill="#8a8a8a"/>
<text x="1031.50" y="333.80" font-size="17" fill="#000" textLength="87.91" lengthAdjust="spacingAndGlyphs">Motorbikes</text>
<rect x="1020.5" y="347.5" width="190" height="30.5" fill="#b4c6e7" stroke="#8b8b8b" stroke-width="1" rx="3.5"/>
<rect x="1022.5" y="377.0" width="186" height="1" fill="#8a8a8a"/>
<text x="1031.50" y="368.80" font-size="17" fill="#000" textLength="70.68" lengthAdjust="spacingAndGlyphs">Rickshaw</text>
<rect x="1020.5" y="382.5" width="190" height="30.5" fill="#b4c6e7" stroke="#8b8b8b" stroke-width="1" rx="3.5"/>
<rect x="1022.5" y="412.0" width="186" height="1" fill="#8a8a8a"/>
<text x="1031.50" y="403.80" font-size="17" fill="#000" textLength="57.72" lengthAdjust="spacingAndGlyphs">Scooter</text>
<rect x="1020.5" y="417.5" width="190" height="30.5" fill="#b4c6e7" stroke="#8b8b8b" stroke-width="1" rx="3.5"/>
<rect x="1022.5" y="447.0" width="186" height="1" fill="#8a8a8a"/>
<text x="1031.50" y="438.80" font-size="17" fill="#000" textLength="38.12" lengthAdjust="spacingAndGlyphs">Train</text>
<rect x="1020.5" y="452.5" width="190" height="30.5" fill="#b4c6e7" stroke="#8b8b8b" stroke-width="1" rx="3.5"/>
<rect x="1022.5" y="482.0" width="186" height="1" fill="#8a8a8a"/>
<text x="1031.50" y="473.80" font-size="17" fill="#000" textLength="38.82" lengthAdjust="spacingAndGlyphs">Tram</text>
<rect x="1020.5" y="487.5" width="190" height="30.5" fill="#b4c6e7" stroke="#8b8b8b" stroke-width="1" rx="3.5"/>
<rect x="1022.5" y="517.0" width="186" height="1" fill="#8a8a8a"/>
<text x="1031.50" y="508.80" font-size="17" fill="#000" textLength="50.07" lengthAdjust="spacingAndGlyphs">Trucks</text>
<rect x="1020.5" y="522.5" width="190" height="30.5" fill="#d9e0f1" stroke="#c8cad0" stroke-width="1" rx="3.5"/>
<text x="1031.50" y="543.80" font-size="17" fill="#8c8c8c" textLength="36.14" lengthAdjust="spacingAndGlyphs">Auto</text>
<rect x="1020.5" y="557.5" width="190" height="30.5" fill="#d9e0f1" stroke="#c8cad0" stroke-width="1" rx="3.5"/>
<text x="1031.50" y="578.80" font-size="17" fill="#8c8c8c" textLength="58.66" lengthAdjust="spacingAndGlyphs">Bicycles</text>
</g>
<rect x="1216" y="312" width="22" height="273.5" fill="#efefef"/>
<rect x="1224" y="335" width="5" height="145" fill="#8a8a8a"/>
<rect x="510" y="614" width="240" height="324" fill="#4f7ac7"/>
<rect x="511" y="615" width="238" height="322" fill="#ffffff"/>
<text x="521.30" y="637.00" font-size="17" fill="#000" font-weight="700" textLength="36.88" lengthAdjust="spacingAndGlyphs">Zone</text>
<path d="M677.3,623.3 L679.2,625.7 L683.2,620.7" fill="none" stroke="#6a6a6a" stroke-width="1.3"/>
<rect x="685" y="622.7" width="9.8" height="1.2" fill="#6a6a6a"/>
<path d="M677.3,629.3 L679.2,631.7 L683.2,626.7" fill="none" stroke="#6a6a6a" stroke-width="1.3"/>
<rect x="685" y="628.7" width="9.8" height="1.2" fill="#6a6a6a"/>
<path d="M677.3,635.3 L679.2,637.7 L683.2,632.7" fill="none" stroke="#6a6a6a" stroke-width="1.3"/>
<rect x="685" y="634.7" width="9.8" height="1.2" fill="#6a6a6a"/>
<path d="M716,620.5 H730 L723.8,626.8 V633.0 H721.2 V626.8 Z" fill="#9a9a9a"/>
<path d="M717.8,621.6 L722.3,626.3 V632.0" fill="none" stroke="#ffffff" stroke-width="0.9"/>
<path d="M725.3,630.5 L734.3,638.8 M733.6,631.1 L725.3,638.5" fill="none" stroke="#a6a6a6" stroke-width="1.9"/>
<rect x="520.5" y="646.5" width="218.5" height="1.5" fill="#4472c4"/>
<defs><clipPath id="sc510"><rect x="511" y="652.5" width="238" height="277.5"/></clipPath></defs><g clip-path="url(#sc510)">
<rect x="521.5" y="654.0" width="217" height="30.5" fill="#b4c6e7" stroke="#8b8b8b" stroke-width="1" rx="3.5"/>
<rect x="523.5" y="683.5" width="213" height="1" fill="#8a8a8a"/>
<text x="532.50" y="675.30" font-size="17" fill="#000" textLength="42.31" lengthAdjust="spacingAndGlyphs">North</text>
<rect x="521.5" y="689.0" width="217" height="30.5" fill="#b4c6e7" stroke="#8b8b8b" stroke-width="1" rx="3.5"/>
<rect x="523.5" y="718.5" width="213" height="1" fill="#8a8a8a"/>
<text x="532.50" y="710.30" font-size="17" fill="#000" textLength="40.87" lengthAdjust="spacingAndGlyphs">South</text>
<rect x="521.5" y="724.0" width="217" height="30.5" fill="#b4c6e7" stroke="#8b8b8b" stroke-width="1" rx="3.5"/>
<rect x="523.5" y="753.5" width="213" height="1" fill="#8a8a8a"/>
<text x="532.50" y="745.30" font-size="17" fill="#000" textLength="37.00" lengthAdjust="spacingAndGlyphs">West</text>
<rect x="521.5" y="759.0" width="217" height="30.5" fill="#d9e0f1" stroke="#c8cad0" stroke-width="1" rx="3.5"/>
<text x="532.50" y="780.30" font-size="17" fill="#8c8c8c" textLength="30.02" lengthAdjust="spacingAndGlyphs">East</text>
</g>
<rect x="761" y="612" width="240" height="324" fill="#4f7ac7"/>
<rect x="762" y="613" width="238" height="322" fill="#ffffff"/>
<text x="772.30" y="635.30" font-size="17" fill="#000" font-weight="700" textLength="102.56" lengthAdjust="spacingAndGlyphs">Financial Year</text>
<path d="M928.3,622.3 L930.2,624.7 L934.2,619.7" fill="none" stroke="#6a6a6a" stroke-width="1.3"/>
<rect x="936" y="621.7" width="9.8" height="1.2" fill="#6a6a6a"/>
<path d="M928.3,628.3 L930.2,630.7 L934.2,625.7" fill="none" stroke="#6a6a6a" stroke-width="1.3"/>
<rect x="936" y="627.7" width="9.8" height="1.2" fill="#6a6a6a"/>
<path d="M928.3,634.3 L930.2,636.7 L934.2,631.7" fill="none" stroke="#6a6a6a" stroke-width="1.3"/>
<rect x="936" y="633.7" width="9.8" height="1.2" fill="#6a6a6a"/>
<path d="M967,619.5 H981 L974.8,625.8 V632.0 H972.2 V625.8 Z" fill="#9a9a9a"/>
<path d="M968.8,620.6 L973.3,625.3 V631.0" fill="none" stroke="#ffffff" stroke-width="0.9"/>
<path d="M976.3,629.5 L985.3,637.8 M984.6,630.1 L976.3,637.5" fill="none" stroke="#a6a6a6" stroke-width="1.9"/>
<rect x="772" y="644.5" width="218" height="1.5" fill="#4472c4"/>
<defs><clipPath id="sc761"><rect x="762" y="650.8" width="238" height="279.20000000000005"/></clipPath></defs><g clip-path="url(#sc761)">
<rect x="772.5" y="652.3" width="217" height="30.5" fill="#b4c6e7" stroke="#8b8b8b" stroke-width="1" rx="3.5"/>
<rect x="774.5" y="681.8" width="213" height="1" fill="#8a8a8a"/>
<text x="783.50" y="673.60" font-size="17" fill="#000" textLength="35.30" lengthAdjust="spacingAndGlyphs">2016</text>
<rect x="772.5" y="687.3" width="217" height="30.5" fill="#d9e0f1" stroke="#c8cad0" stroke-width="1" rx="3.5"/>
<text x="783.50" y="708.60" font-size="17" fill="#8c8c8c" textLength="35.30" lengthAdjust="spacingAndGlyphs">2015</text>
</g>
<path d="M949.3,509.2 L869.5,447.5" fill="none" stroke="#e31b23" stroke-width="4.8"/>
<path d="M849.8,432.3 L877.1,438.1 L861.8,457.3 Z" fill="#e31b23"/>
<text x="1497.90" y="289.00" font-size="27" fill="#1e1e1e" textLength="192.28" lengthAdjust="spacingAndGlyphs" stroke="#e6e6e6" stroke-width="0.45">PivotTable Fields</text>
<path d="M1832.5,273 L1840.5,281.5 L1848.5,273" fill="none" stroke="#333" stroke-width="1.4"/>
<path d="M1886,271 L1898.3,283.2 M1898.3,271 L1886,283.2" fill="none" stroke="#333" stroke-width="1.4"/>
<text x="1498.80" y="328.60" font-size="16" fill="#262626" textLength="203.23" lengthAdjust="spacingAndGlyphs">Choose fields to add to report:</text>
<rect x="1849" y="306" width="56" height="35" fill="#8f8f8f"/>
<rect x="1850" y="307" width="54" height="33" fill="#ffffff"/>
<path d="M1878.39,321.40 L1878.39,325.00 L1876.39,325.42 L1875.42,327.10 L1876.06,329.05 L1872.94,330.85 L1871.57,329.32 L1869.63,329.32 L1868.26,330.85 L1865.14,329.05 L1865.78,327.10 L1864.81,325.42 L1862.81,325.00 L1862.81,321.40 L1864.81,320.98 L1865.78,319.30 L1865.14,317.35 L1868.26,315.55 L1869.63,317.08 L1871.57,317.08 L1872.94,315.55 L1876.06,317.35 L1875.42,319.30 L1876.39,320.98Z" fill="#9a9a9a" stroke="#9a9a9a" stroke-width="0.8" stroke-linejoin="round"/>
<circle cx="1870.6" cy="323.2" r="2.9" fill="#ffffff"/>
<path d="M1889.2,320.3 H1898.6 L1893.9,325.5 Z" fill="#222"/>
<rect x="1498" y="357" width="407" height="30" fill="#c6c6c6"/>
<rect x="1499" y="358" width="405" height="28" fill="#ffffff"/>
<text x="1506.70" y="375.70" font-size="16" fill="#6d6d6d" textLength="43.08" lengthAdjust="spacingAndGlyphs">Search</text>
<circle cx="1892.5" cy="369" r="6.3" fill="none" stroke="#444" stroke-width="1.3"/>
<path d="M1887.8,373.8 L1880.5,381" fill="none" stroke="#444" stroke-width="1.5"/>
<rect x="1498" y="407" width="407" height="215" fill="#aaaaaa"/>
<rect x="1499" y="408" width="405" height="213" fill="#ffffff"/>
<rect x="1503" y="411.5" width="16" height="16" fill="#666666"/>
<rect x="1504" y="412.5" width="14" height="14" fill="#ffffff"/>
<text x="1526.30" y="428.50" font-size="15.2" fill="#262626" textLength="73.32" lengthAdjust="spacingAndGlyphs">Order Date</text>
<rect x="1503" y="438.5" width="16" height="16" fill="#217346"/>
<path d="M1506.3,446.3 L1509.6,449.5 L1515.8,443.3" fill="none" stroke="#ffffff" stroke-width="1.6"/>
<text x="1526.30" y="455.50" font-size="15.2" fill="#000" font-weight="700" textLength="85.50" lengthAdjust="spacingAndGlyphs">Sales Month</text>
<rect x="1503" y="465.5" width="16" height="16" fill="#217346"/>
<path d="M1506.3,473.3 L1509.6,476.5 L1515.8,470.3" fill="none" stroke="#ffffff" stroke-width="1.6"/>
<text x="1526.30" y="482.50" font-size="15.2" fill="#000" font-weight="700" textLength="95.27" lengthAdjust="spacingAndGlyphs">Financial Year</text>
<rect x="1503" y="492.5" width="16" height="16" fill="#666666"/>
<rect x="1504" y="493.5" width="14" height="14" fill="#ffffff"/>
<text x="1526.30" y="509.50" font-size="15.2" fill="#262626" textLength="62.73" lengthAdjust="spacingAndGlyphs">Salesman</text>
<rect x="1503" y="519.5" width="16" height="16" fill="#217346"/>
<path d="M1506.3,527.3 L1509.6,530.5 L1515.8,524.3" fill="none" stroke="#ffffff" stroke-width="1.6"/>
<text x="1526.30" y="536.50" font-size="15.2" fill="#000" font-weight="700" textLength="34.48" lengthAdjust="spacingAndGlyphs">Zone</text>
<rect x="1503" y="546.5" width="16" height="16" fill="#217346"/>
<path d="M1506.3,554.3 L1509.6,557.5 L1515.8,551.3" fill="none" stroke="#ffffff" stroke-width="1.6"/>
<text x="1526.30" y="563.50" font-size="15.2" fill="#000" font-weight="700" textLength="61.49" lengthAdjust="spacingAndGlyphs">Products</text>
<rect x="1503" y="573.5" width="16" height="16" fill="#217346"/>
<path d="M1506.3,581.3 L1509.6,584.5 L1515.8,578.3" fill="none" stroke="#ffffff" stroke-width="1.6"/>
<text x="1526.30" y="590.50" font-size="15.2" fill="#000" font-weight="700" textLength="64.67" lengthAdjust="spacingAndGlyphs">Net Sales</text>
<path d="M1863.5,495.8 H1878.5 L1873,502 V509.8 H1869 V502 Z" fill="#7a7a7a"/>
<text x="1502.70" y="616.80" font-size="16" fill="#262626" textLength="90.33" lengthAdjust="spacingAndGlyphs">More Tables...</text>
<rect x="1884" y="410" width="19" height="209" fill="#f3f3f3"/>
<rect x="1884" y="410" width="19" height="19" fill="#a0a0a0"/>
<rect x="1885" y="411" width="17" height="17" fill="#ffffff"/>
<path d="M1889,422.5 H1898 L1893.5,417.5 Z" fill="#222"/>
<rect x="1884" y="429" width="19" height="167" fill="#a0a0a0"/>
<rect x="1885" y="430" width="17" height="165" fill="#ffffff"/>
<rect x="1884" y="600" width="19" height="19" fill="#a0a0a0"/>
<rect x="1885" y="601" width="17" height="17" fill="#ffffff"/>
<path d="M1889,606.8 H1898 L1893.5,611.8 Z" fill="#222"/>
<rect x="1499" y="640.5" width="1.5" height="1" fill="#bdbdbd"/>
<rect x="1502" y="640.5" width="1.5" height="1" fill="#bdbdbd"/>
<rect x="1505" y="640.5" width="1.5" height="1" fill="#bdbdbd"/>
<rect x="1508" y="640.5" width="1.5" height="1" fill="#bdbdbd"/>
<rect x="1511" y="640.5" width="1.5" height="1" fill="#bdbdbd"/>
<rect x="1514" y="640.5" width="1.5" height="1" fill="#bdbdbd"/>
<rect x="1517" y="640.5" width="1.5" height="1" fill="#bdbdbd"/>
<rect x="1520" y="640.5" width="1.5" height="1" fill="#bdbdbd"/>
<rect x="1523" y="640.5" width="1.5" height="1" fill="#bdbdbd"/>
<rect x="1526" y="640.5" width="1.5" height="1" fill="#bdbdbd"/>
<rect x="1529" y="640.5" width="1.5" height="1" fill="#bdbdbd"/>
<rect x="1532" y="640.5" width="1.5" height="1" fill="#bdbdbd"/>
<rect x="1535" y="640.5" width="1.5" height="1" fill="#bdbdbd"/>
<rect x="1538" y="640.5" width="1.5" height="1" fill="#bdbdbd"/>
<rect x="1541" y="640.5" width="1.5" height="1" fill="#bdbdbd"/>
<rect x="1544" y="640.5" width="1.5" height="1" fill="#bdbdbd"/>
<rect x="1547" y="640.5" width="1.5" height="1" fill="#bdbdbd"/>
<rect x="1550" y="640.5" width="1.5" height="1" fill="#bdbdbd"/>
<rect x="1553" y="640.5" width="1.5" height="1" fill="#bdbdbd"/>
<rect x="1556" y="640.5" width="1.5" height="1" fill="#bdbdbd"/>
<rect x="1559" y="640.5" width="1.5" height="1" fill="#bdbdbd"/>
<rect x="1562" y="640.5" width="1.5" height="1" fill="#bdbdbd"/>
<rect x="1565" y="640.5" width="1.5" height="1" fill="#bdbdbd"/>
<rect x="1568" y="640.5" width="1.5" height="1" fill="#bdbdbd"/>
<rect x="1571" y="640.5" width="1.5" height="1" fill="#bdbdbd"/>
<rect x="1574" y="640.5" width="1.5" height="1" fill="#bdbdbd"/>
<rect x="1577" y="640.5" width="1.5" height="1" fill="#bdbdbd"/>
<rect x="1580" y="640.5" width="1.5" height="1" fill="#bdbdbd"/>
<rect x="1583" y="640.5" width="1.5" height="1" fill="#bdbdbd"/>
<rect x="1586" y="640.5" width="1.5" height="1" fill="#bdbdbd"/>
<rect x="1589" y="640.5" width="1.5" height="1" fill="#bdbdbd"/>
<rect x="1592" y="640.5" width="1.5" height="1" fill="#bdbdbd"/>
<rect x="1595" y="640.5" width="1.5" height="1" fill="#bdbdbd"/>
<rect x="1598" y="640.5" width="1.5" height="1" fill="#bdbdbd"/>
<rect x="1601" y="640.5" width="1.5" height="1" fill="#bdbdbd"/>
<rect x="1604" y="640.5" width="1.5" height="1" fill="#bdbdbd"/>
<rect x="1607" y="640.5" width="1.5" height="1" fill="#bdbdbd"/>
<rect x="1610" y="640.5" width="1.5" height="1" fill="#bdbdbd"/>
<rect x="1613" y="640.5" width="1.5" height="1" fill="#bdbdbd"/>
<rect x="1616" y="640.5" width="1.5" height="1" fill="#bdbdbd"/>
<rect x="1619" y="640.5" width="1.5" height="1" fill="#bdbdbd"/>
<rect x="1622" y="640.5" width="1.5" height="1" fill="#bdbdbd"/>
<rect x="1625" y="640.5" width="1.5" height="1" fill="#bdbdbd"/>
<rect x="1628" y="640.5" width="1.5" height="1" fill="#bdbdbd"/>
<rect x="1631" y="640.5" width="1.5" height="1" fill="#bdbdbd"/>
<rect x="1634" y="640.5" width="1.5" height="1" fill="#bdbdbd"/>
<rect x="1637" y="640.5" width="1.5" height="1" fill="#bdbdbd"/>
<rect x="1640" y="640.5" width="1.5" height="1" fill="#bdbdbd"/>
<rect x="1643" y="640.5" width="1.5" height="1" fill="#bdbdbd"/>
<rect x="1646" y="640.5" width="1.5" height="1" fill="#bdbdbd"/>
<rect x="1649" y="640.5" width="1.5" height="1" fill="#bdbdbd"/>
<rect x="1652" y="640.5" width="1.5" height="1" fill="#bdbdbd"/>
<rect x="1655" y="640.5" width="1.5" height="1" fill="#bdbdbd"/>
<rect x="1658" y="640.5" width="1.5" height="1" fill="#bdbdbd"/>
<rect x="1661" y="640.5" width="1.5" height="1" fill="#bdbdbd"/>
<rect x="1664" y="640.5" width="1.5" height="1" fill="#bdbdbd"/>
<rect x="1667" y="640.5" width="1.5" height="1" fill="#bdbdbd"/>
<rect x="1670" y="640.5" width="1.5" height="1" fill="#bdbdbd"/>
<rect x="1673" y="640.5" width="1.5" height="1" fill="#bdbdbd"/>
<rect x="1676" y="640.5" width="1.5" height="1" fill="#bdbdbd"/>
<rect x="1679" y="640.5" width="1.5" height="1" fill="#bdbdbd"/>
<rect x="1682" y="640.5" width="1.5" height="1" fill="#bdbdbd"/>
<rect x="1685" y="640.5" width="1.5" height="1" fill="#bdbdbd"/>
<rect x="1688" y="640.5" width="1.5" height="1" fill="#bdbdbd"/>
<rect x="1691" y="640.5" width="1.5" height="1" fill="#bdbdbd"/>
<rect x="1694" y="640.5" width="1.5" height="1" fill="#bdbdbd"/>
<rect x="1697" y="640.5" width="1.5" height="1" fill="#bdbdbd"/>
<rect x="1700" y="640.5" width="1.5" height="1" fill="#bdbdbd"/>
<rect x="1703" y="640.5" width="1.5" height="1" fill="#bdbdbd"/>
<rect x="1706" y="640.5" width="1.5" height="1" fill="#bdbdbd"/>
<rect x="1709" y="640.5" width="1.5" height="1" fill="#bdbdbd"/>
<rect x="1712" y="640.5" width="1.5" height="1" fill="#bdbdbd"/>
<rect x="1715" y="640.5" width="1.5" height="1" fill="#bdbdbd"/>
<rect x="1718" y="640.5" width="1.5" height="1" fill="#bdbdbd"/>
<rect x="1721" y="640.5" width="1.5" height="1" fill="#bdbdbd"/>
<rect x="1724" y="640.5" width="1.5" height="1" fill="#bdbdbd"/>
<rect x="1727" y="640.5" width="1.5" height="1" fill="#bdbdbd"/>
<rect x="1730" y="640.5" width="1.5" height="1" fill="#bdbdbd"/>
<rect x="1733" y="640.5" width="1.5" height="1" fill="#bdbdbd"/>
<rect x="1736" y="640.5" width="1.5" height="1" fill="#bdbdbd"/>
<rect x="1739" y="640.5" width="1.5" height="1" fill="#bdbdbd"/>
<rect x="1742" y="640.5" width="1.5" height="1" fill="#bdbdbd"/>
<rect x="1745" y="640.5" width="1.5" height="1" fill="#bdbdbd"/>
<rect x="1748" y="640.5" width="1.5" height="1" fill="#bdbdbd"/>
<rect x="1751" y="640.5" width="1.5" height="1" fill="#bdbdbd"/>
<rect x="1754" y="640.5" width="1.5" height="1" fill="#bdbdbd"/>
<rect x="1757" y="640.5" width="1.5" height="1" fill="#bdbdbd"/>
<rect x="1760" y="640.5" width="1.5" height="1" fill="#bdbdbd"/>
<rect x="1763" y="640.5" width="1.5" height="1" fill="#bdbdbd"/>
<rect x="1766" y="640.5" width="1.5" height="1" fill="#bdbdbd"/>
<rect x="1769" y="640.5" width="1.5" height="1" fill="#bdbdbd"/>
<rect x="1772" y="640.5" width="1.5" height="1" fill="#bdbdbd"/>
<rect x="1775" y="640.5" width="1.5" height="1" fill="#bdbdbd"/>
<rect x="1778" y="640.5" width="1.5" height="1" fill="#bdbdbd"/>
<rect x="1781" y="640.5" width="1.5" height="1" fill="#bdbdbd"/>
<rect x="1784" y="640.5" width="1.5" height="1" fill="#bdbdbd"/>
<rect x="1787" y="640.5" width="1.5" height="1" fill="#bdbdbd"/>
<rect x="1790" y="640.5" width="1.5" height="1" fill="#bdbdbd"/>
<rect x="1793" y="640.5" width="1.5" height="1" fill="#bdbdbd"/>
<rect x="1796" y="640.5" width="1.5" height="1" fill="#bdbdbd"/>
<rect x="1799" y="640.5" width="1.5" height="1" fill="#bdbdbd"/>
<rect x="1802" y="640.5" width="1.5" height="1" fill="#bdbdbd"/>
<rect x="1805" y="640.5" width="1.5" height="1" fill="#bdbdbd"/>
<rect x="1808" y="640.5" width="1.5" height="1" fill="#bdbdbd"/>
<rect x="1811" y="640.5" width="1.5" height="1" fill="#bdbdbd"/>
<rect x="1814" y="640.5" width="1.5" height="1" fill="#bdbdbd"/>
<rect x="1817" y="640.5" width="1.5" height="1" fill="#bdbdbd"/>
<rect x="1820" y="640.5" width="1.5" height="1" fill="#bdbdbd"/>
<rect x="1823" y="640.5" width="1.5" height="1" fill="#bdbdbd"/>
<rect x="1826" y="640.5" width="1.5" height="1" fill="#bdbdbd"/>
<rect x="1829" y="640.5" width="1.5" height="1" fill="#bdbdbd"/>
<rect x="1832" y="640.5" width="1.5" height="1" fill="#bdbdbd"/>
<rect x="1835" y="640.5" width="1.5" height="1" fill="#bdbdbd"/>
<rect x="1838" y="640.5" width="1.5" height="1" fill="#bdbdbd"/>
<rect x="1841" y="640.5" width="1.5" height="1" fill="#bdbdbd"/>
<rect x="1844" y="640.5" width="1.5" height="1" fill="#bdbdbd"/>
<rect x="1847" y="640.5" width="1.5" height="1" fill="#bdbdbd"/>
<rect x="1850" y="640.5" width="1.5" height="1" fill="#bdbdbd"/>
<rect x="1853" y="640.5" width="1.5" height="1" fill="#bdbdbd"/>
<rect x="1856" y="640.5" width="1.5" height="1" fill="#bdbdbd"/>
<rect x="1859" y="640.5" width="1.5" height="1" fill="#bdbdbd"/>
<rect x="1862" y="640.5" width="1.5" height="1" fill="#bdbdbd"/>
<rect x="1865" y="640.5" width="1.5" height="1" fill="#bdbdbd"/>
<rect x="1868" y="640.5" width="1.5" height="1" fill="#bdbdbd"/>
<rect x="1871" y="640.5" width="1.5" height="1" fill="#bdbdbd"/>
<rect x="1874" y="640.5" width="1.5" height="1" fill="#bdbdbd"/>
<rect x="1877" y="640.5" width="1.5" height="1" fill="#bdbdbd"/>
<rect x="1880" y="640.5" width="1.5" height="1" fill="#bdbdbd"/>
<rect x="1883" y="640.5" width="1.5" height="1" fill="#bdbdbd"/>
<rect x="1886" y="640.5" width="1.5" height="1" fill="#bdbdbd"/>
<rect x="1889" y="640.5" width="1.5" height="1" fill="#bdbdbd"/>
<rect x="1892" y="640.5" width="1.5" height="1" fill="#bdbdbd"/>
<rect x="1895" y="640.5" width="1.5" height="1" fill="#bdbdbd"/>
<rect x="1898" y="640.5" width="1.5" height="1" fill="#bdbdbd"/>
<rect x="1901" y="640.5" width="1.5" height="1" fill="#bdbdbd"/>
<rect x="1904" y="640.5" width="1.5" height="1" fill="#bdbdbd"/>
<rect x="1907" y="640.5" width="1.5" height="1" fill="#bdbdbd"/>
<text x="1503.00" y="661.70" font-size="16" fill="#262626" textLength="221.12" lengthAdjust="spacingAndGlyphs">Drag fields between areas below:</text>
<path d="M1507,690.5 H1521 L1515.7,697 V704.6 H1512.3 V697 Z" fill="#7a7a7a"/>
<text x="1529.90" y="703.80" font-size="16" fill="#262626" textLength="39.43" lengthAdjust="spacingAndGlyphs">Filters</text>
<rect x="1712.5" y="690.5" width="2" height="13" fill="#888"/>
<rect x="1715.5" y="690.5" width="1.3" height="13" fill="#888"/>
<rect x="1718.5" y="690.5" width="1.3" height="13" fill="#888"/>
<rect x="1721.5" y="690.5" width="1.3" height="13" fill="#888"/>
<text x="1733.70" y="703.80" font-size="16" fill="#262626" textLength="57.01" lengthAdjust="spacingAndGlyphs">Columns</text>
<rect x="1508" y="818.0" width="12.3" height="1.3" fill="#888"/>
<rect x="1508" y="820.7" width="12.3" height="1.3" fill="#888"/>
<rect x="1508" y="823.4" width="12.3" height="1.3" fill="#888"/>
<rect x="1508" y="826.1" width="12.3" height="1.3" fill="#888"/>
<text x="1529.90" y="830.00" font-size="16" fill="#262626" textLength="35.11" lengthAdjust="spacingAndGlyphs">Rows</text>
<path d="M1723,818 H1712.5 L1718,823.5 L1712.5,829 H1723.5" fill="none" stroke="#888" stroke-width="1.4"/>
<text x="1733.70" y="830.00" font-size="16" fill="#262626" textLength="42.78" lengthAdjust="spacingAndGlyphs">Values</text>
<rect x="1703" y="687" width="1.5" height="238" fill="#c6c6c6"/>
<rect x="1502" y="805.5" width="404" height="1.5" fill="#c6c6c6"/>
<rect x="1502" y="713" width="193" height="85" fill="#ffffff"/>
<rect x="1706" y="713" width="200" height="85" fill="#ffffff"/>
<rect x="1502" y="839.5" width="193" height="85" fill="#ffffff"/>
<rect x="1706" y="839.5" width="200" height="85" fill="#ffffff"/>
<rect x="1503" y="715" width="192" height="26" fill="#c6c6c6"/>
<rect x="1504" y="716" width="190" height="24" fill="#ffffff"/>
<text x="1512.00" y="733.70" font-size="16" fill="#262626" textLength="82.58" lengthAdjust="spacingAndGlyphs">Sales Month</text>
<path d="M1674,725 H1684 L1679,730.3 Z" fill="#222"/>
<rect x="1503" y="743" width="192" height="26" fill="#c6c6c6"/>
<rect x="1504" y="744" width="190" height="24" fill="#ffffff"/>
<text x="1512.00" y="761.70" font-size="16" fill="#262626" textLength="56.82" lengthAdjust="spacingAndGlyphs">Products</text>
<path d="M1674,753 H1684 L1679,758.3 Z" fill="#222"/>
<rect x="1503" y="841" width="192" height="26" fill="#c6c6c6"/>
<rect x="1504" y="842" width="190" height="24" fill="#ffffff"/>
<text x="1512.00" y="859.70" font-size="16" fill="#262626" textLength="33.49" lengthAdjust="spacingAndGlyphs">Zone</text>
<path d="M1674,851 H1684 L1679,856.3 Z" fill="#222"/>
<rect x="1503" y="869" width="192" height="26" fill="#c6c6c6"/>
<rect x="1504" y="870" width="190" height="24" fill="#ffffff"/>
<text x="1512.00" y="887.70" font-size="16" fill="#262626" textLength="91.46" lengthAdjust="spacingAndGlyphs">Financial Year</text>
<path d="M1674,879 H1684 L1679,884.3 Z" fill="#222"/>
<rect x="1707" y="841" width="198" height="26" fill="#c6c6c6"/>
<rect x="1708" y="842" width="196" height="24" fill="#ffffff"/>
<text x="1716.00" y="859.70" font-size="16" fill="#262626" textLength="113.02" lengthAdjust="spacingAndGlyphs">Sum of Net Sales</text>
<path d="M1884,851 H1894 L1889,856.3 Z" fill="#222"/>
<rect x="1506" y="957" width="16" height="16" fill="#666666"/>
<rect x="1507" y="958" width="14" height="14" fill="#ffffff"/>
<text x="1530.60" y="970.70" font-size="16" fill="#262626" textLength="136.87" lengthAdjust="spacingAndGlyphs">Defer Layout Update</text>
<rect x="1843" y="949" width="63" height="31" fill="#dcdcdc"/>
<rect x="1844" y="950" width="61" height="29" fill="#ffffff"/>
<text x="1850.00" y="970.70" font-size="16" fill="#c6c6c6" textLength="48.00" lengthAdjust="spacingAndGlyphs">Update</text>
<rect x="0" y="962" width="1482" height="31" fill="#e6e6e6"/>
<rect x="0" y="961" width="1457" height="1" fill="#ababab"/>
<path d="M35.5,973 L30,977.5 L35.5,982 Z" fill="#bdbdbd"/>
<path d="M62,973 L67.5,977.5 L62,982 Z" fill="#bdbdbd"/>
<rect x="112" y="961" width="115" height="29" fill="#ababab"/>
<rect x="113" y="962" width="113" height="28" fill="#ffffff"/>
<rect x="112" y="987.5" width="115" height="2.3" fill="#217346"/>
<text x="124.90" y="980.50" font-size="16" fill="#217346" font-weight="700" textLength="88.91" lengthAdjust="spacingAndGlyphs">Pivot Table</text>
<text x="240.10" y="980.50" font-size="16" fill="#444444" textLength="92.10" lengthAdjust="spacingAndGlyphs">Source Data</text>
<rect x="346" y="965.5" width="1" height="23" fill="#ababab"/>
<circle cx="395" cy="977.8" r="9.6" fill="none" stroke="#6d6d6d" stroke-width="1.2"/>
<rect x="390" y="977.2" width="10" height="1.3" fill="#6d6d6d"/>
<rect x="394.35" y="972.8" width="1.3" height="10" fill="#6d6d6d"/>
<rect x="888" y="971" width="2.5" height="2.5" fill="#a6a6a6"/>
<rect x="888" y="975.5" width="2.5" height="2.5" fill="#a6a6a6"/>
<rect x="888" y="980" width="2.5" height="2.5" fill="#a6a6a6"/>
<rect x="908" y="968" width="549" height="19" fill="#f3f3f3"/>
<rect x="908" y="968" width="19" height="19" fill="#a0a0a0"/>
<rect x="909" y="969" width="17" height="17" fill="#ffffff"/>
<path d="M919.5,972.8 L913.8,977.5 L919.5,982.2 Z" fill="#222"/>
<rect x="926" y="968" width="481" height="19" fill="#a0a0a0"/>
<rect x="927" y="969" width="479" height="17" fill="#ffffff"/>
<rect x="1438" y="968" width="19" height="19" fill="#a0a0a0"/>
<rect x="1439" y="969" width="17" height="17" fill="#ffffff"/>
<path d="M1445.5,972.8 L1451.2,977.5 L1445.5,982.2 Z" fill="#222"/>
<text x="14.20" y="1011.90" font-size="14" fill="#444444" textLength="35.81" lengthAdjust="spacingAndGlyphs">Ready</text>
<rect x="1547" y="994" width="50" height="26" fill="#c6c6c6"/>
<rect x="1564" y="999" width="16" height="16" fill="#7a7a7a"/>
<rect x="1565" y="1000" width="4" height="4" fill="#c6c6c6"/>
<rect x="1565" y="1005" width="4" height="4" fill="#c6c6c6"/>
<rect x="1565" y="1010" width="4" height="4" fill="#c6c6c6"/>
<rect x="1570" y="1000" width="4" height="4" fill="#c6c6c6"/>
<rect x="1570" y="1005" width="4" height="4" fill="#c6c6c6"/>
<rect x="1570" y="1010" width="4" height="4" fill="#c6c6c6"/>
<rect x="1575" y="1000" width="4" height="4" fill="#c6c6c6"/>
<rect x="1575" y="1005" width="4" height="4" fill="#c6c6c6"/>
<rect x="1575" y="1010" width="4" height="4" fill="#c6c6c6"/>
<rect x="1613" y="999" width="17" height="16" fill="none" stroke="#7a7a7a" stroke-width="1.2"/>
<rect x="1617" y="1002" width="9" height="10" fill="none" stroke="#7a7a7a" stroke-width="1"/>
<rect x="1619" y="1004.5" width="5" height="0.9" fill="#7a7a7a"/>
<rect x="1619" y="1007" width="5" height="0.9" fill="#7a7a7a"/>
<rect x="1619" y="1009.5" width="5" height="0.9" fill="#7a7a7a"/>
<rect x="1663.5" y="999.5" width="16.5" height="15.5" fill="none" stroke="#7a7a7a" stroke-width="1.2"/>
<path d="M1668.5,999.5 V1007.5 H1663.5 M1672.5,999.5 V1007.5 H1668.5" fill="none" stroke="#7a7a7a" stroke-width="1.1"/>
<rect x="1704" y="1006.3" width="10" height="1.3" fill="#444"/>
<rect x="1720" y="1006.5" width="125" height="1.2" fill="#555"/>
<rect x="1780.5" y="1000" width="5.5" height="14" fill="#444"/>
<rect x="1851" y="1006.3" width="10" height="1.3" fill="#444"/>
<rect x="1855.35" y="1002" width="1.3" height="10" fill="#444"/>
<text x="1878.20" y="1012.20" font-size="13.5" fill="#444444" textLength="30.07" lengthAdjust="spacingAndGlyphs">100%</text>
</svg>
</body></html>
